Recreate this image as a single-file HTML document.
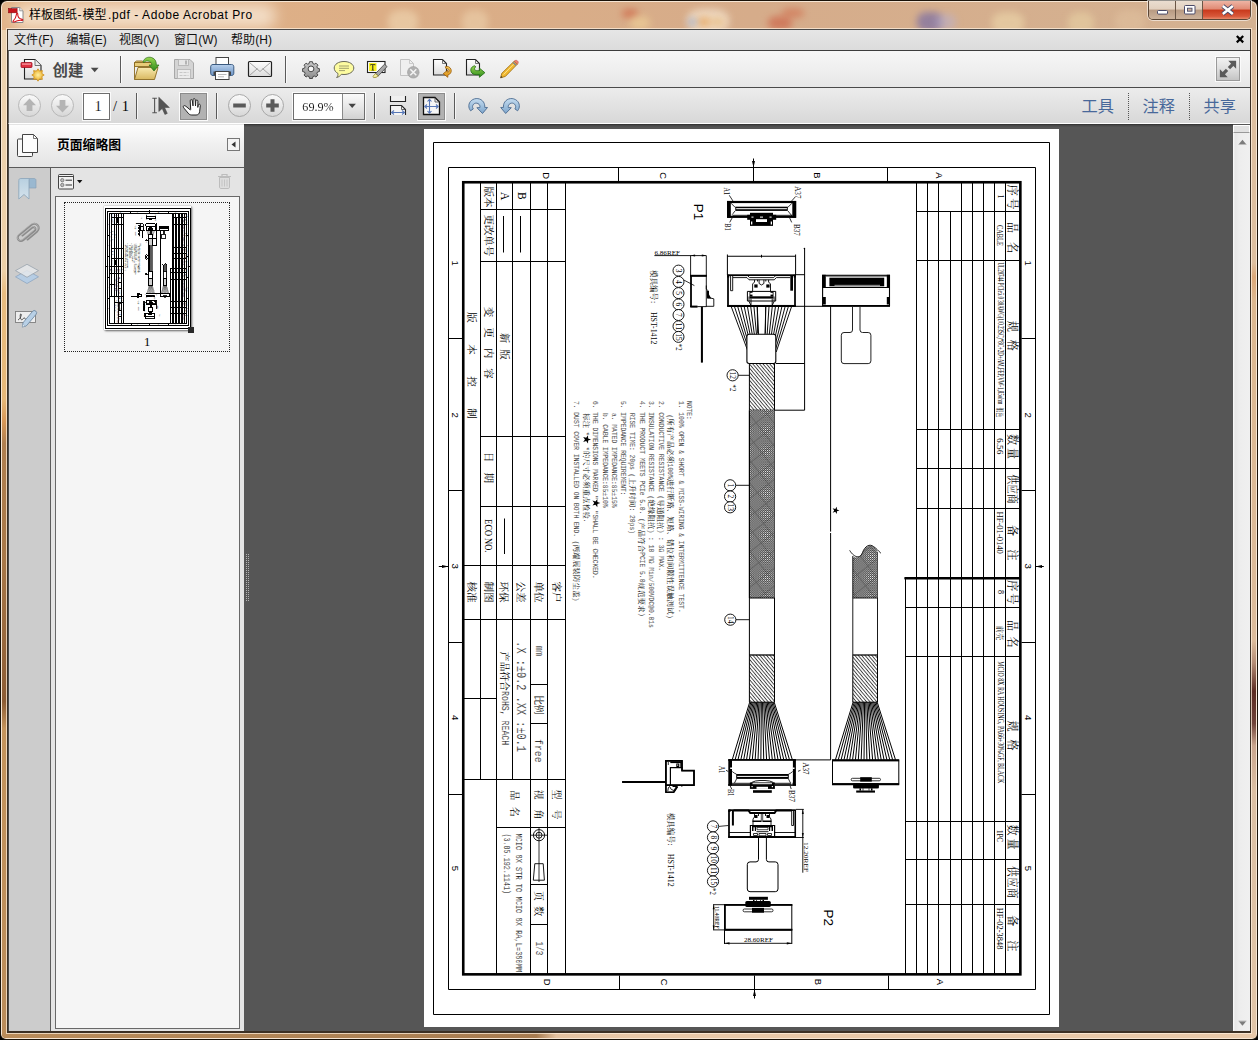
<!DOCTYPE html>
<html><head><meta charset="utf-8"><title>样板图纸-模型.pdf - Adobe Acrobat Pro</title>
<style>
*{box-sizing:border-box}
html,body{margin:0;padding:0}
body{width:1258px;height:1040px;overflow:hidden;position:relative;background:#000;font-family:"Liberation Sans",sans-serif;font-size:12px;color:#000}
.abs{position:absolute}
#frame{left:0;top:0;width:1258px;height:1040px;border-radius:7px 7px 6px 6px;background:#1a1208;overflow:hidden}
#glass{left:1px;top:1px;width:1256px;height:1038px;border-radius:6px 6px 5px 5px;background:#f6e6d4;overflow:hidden}
#tan{left:1px;top:1px;width:1254px;height:1036px;border-radius:5px 5px 4px 4px;overflow:hidden;
 background:linear-gradient(90deg,#e2b48a 0%,#dcae86 30%,#d6ac8a 60%,#d4b292 100%)}
#tanL{left:0;top:28px;width:5px;height:1008px;background:linear-gradient(180deg,#ecd2b0 0.0%,#ecd0a8 23.9%,#e8bc80 26.1%,#e6b878 36.6%,#d89858 38.8%,#b08050 41.0%,#a87848 52.7%,#8c5c34 66.6%,#c4945c 69.3%,#ba8c5a 100.0%)}
#tanR{left:1249px;top:28px;width:5px;height:1008px;background:linear-gradient(180deg,#dec0a0 0.0%,#dec0a0 23.1%,#dca878 24.5%,#dcb890 26.9%,#dcbc9c 60.6%,#b48c74 62.8%,#5c2c22 65.6%,#70443a 68.8%,#caa68e 71.0%,#dcc0a4 75.5%,#e2c6a8 100.0%)}
#tanB{left:0;top:1031px;width:1254px;height:5px;background:linear-gradient(90deg,#ba8c5a 0%,#ae8254 30%,#a87c50 42.6%,#e4c2a0 44.2%,#e8c8a8 50%,#e8c8a8 100%)}
.blob{position:absolute;border-radius:40%;filter:blur(3.5px)}
#client{left:7px;top:29px;width:1244px;height:1004px;background:#3c3024;box-shadow:0 0 0 1px rgba(255,240,222,.72)}
#cl2{left:8px;top:29px;width:1242px;height:1002px;background:#565656;overflow:hidden}
#title{left:29px;top:7px;height:16px;line-height:16px;font-size:12px;white-space:nowrap;color:#000}
#menubar{left:0;top:0;width:1242px;height:21px;border-top:1px solid #4a4a4a;background:linear-gradient(180deg,#e6e6e6,#dcdcdc)}
.mi{position:absolute;top:3px;height:15px;line-height:15px;font-size:12px;white-space:nowrap;color:#111}
#tb1{left:0;top:21px;width:1242px;height:37px;border-top:1px solid #3c3c3c;border-left:1px solid #666;background:linear-gradient(180deg,#f6f6f6 0%,#efefef 50%,#e6e6e6 100%)}
#tb2{left:0;top:58px;width:1242px;height:37px;border-top:1px solid #4a4a4a;border-left:1px solid #666;border-bottom:1px solid #fff;background:linear-gradient(180deg,#ececec 0%,#e2e2e2 50%,#d8d8d8 100%)}
.sep{position:absolute;width:1px;background:#5a5a5a}
.sep:after{content:"";position:absolute;left:1px;top:0;width:1px;height:100%;background:rgba(255,255,255,.7)}
.dsep{position:absolute;width:0;border-left:1px dotted #555;top:5px;height:27px}
.box{position:absolute;background:#fff;border:1px solid #6e6e6e;box-shadow:0 0 0 1px rgba(255,255,255,.8)}
.selbtn{position:absolute;background:#b2b2b2;border:1px solid #8c8c8c;box-shadow:0 0 0 1px rgba(255,255,255,.85)}
.serif{font-family:"Liberation Serif",serif}
#doc{left:236px;top:95px;width:989px;height:908px;background:#565656}
#docshadow{left:0;top:95px;width:1225px;height:3px;background:linear-gradient(180deg,#2e2e2e,#484848 50%,#545454)}
#page{left:416px;top:100px;width:635px;height:898px;background:#fff}
#vs{left:1225px;top:96px;width:17px;height:907px;background:linear-gradient(90deg,#fdfdfd 0,#e6e6e6 2px,#ededed 6px,#f0f0f0 100%)}
#nav{left:0;top:95px;width:236px;height:908px;background:#e4e4e4}
#navl{left:0;top:0;width:1px;height:908px;background:#4c4c4c}
#navhead{left:1px;top:1px;width:235px;height:43px;background:linear-gradient(180deg,#fdfdfd 0%,#f0f0f0 45%,#e4e4e4 100%);border-bottom:1px solid #5a5a5a}
#strip{left:1px;top:44px;width:42px;height:863px;background:#cccccc;border-right:1px solid #5c5c5c}
#thumbs{left:47px;top:72px;width:185px;height:833px;background:#f5f5f5;border:1px solid #686868}
#navr{left:235px;top:1px;width:1px;height:906px;background:#c8c8c8}
svg{position:absolute;overflow:visible}
#dwg .n{vector-effect:non-scaling-stroke}
.cj{font-family:"Liberation Sans","Noto Sans CJK SC",sans-serif}
.cjb{font-family:"Liberation Sans","Noto Sans CJK SC",sans-serif;font-weight:bold}
.cs{font-family:"Liberation Serif","Noto Serif CJK SC",serif}
</style></head><body>
<div id="frame" class="abs"><div id="glass" class="abs"><div id="tan" class="abs">
<div class="blob" style="left:386px;top:8px;width:30px;height:24px;background:#f2dcb8;opacity:0.55"></div>
<div class="blob" style="left:460px;top:8px;width:26px;height:24px;background:#f0d8b4;opacity:0.5"></div>
<div class="blob" style="left:620px;top:7px;width:16px;height:9px;background:#cc5a3c;opacity:0.6"></div>
<div class="blob" style="left:628px;top:14px;width:20px;height:14px;background:#f0d49a;opacity:0.6"></div>
<div class="blob" style="left:685px;top:7px;width:42px;height:24px;background:#f6e8d4;opacity:0.7"></div>
<div class="blob" style="left:695px;top:15px;width:14px;height:10px;background:#eaa050;opacity:0.6"></div>
<div class="blob" style="left:686px;top:16px;width:9px;height:8px;background:#7a9ad0;opacity:0.5"></div>
<div class="blob" style="left:710px;top:16px;width:12px;height:8px;background:#e8b060;opacity:0.5"></div>
<div class="blob" style="left:766px;top:14px;width:24px;height:14px;background:#cc5a40;opacity:0.6"></div>
<div class="blob" style="left:780px;top:6px;width:22px;height:10px;background:#d06848;opacity:0.55"></div>
<div class="blob" style="left:915px;top:10px;width:26px;height:20px;background:#6a62a8;opacity:0.6"></div>
<div class="blob" style="left:934px;top:12px;width:20px;height:16px;background:#b8b0d0;opacity:0.5"></div>
<div class="blob" style="left:990px;top:10px;width:32px;height:22px;background:#f0dcae;opacity:0.55"></div>
<div class="blob" style="left:1066px;top:10px;width:26px;height:22px;background:#ecd8a8;opacity:0.5"></div>
<div class="blob" style="left:1113px;top:8px;width:30px;height:22px;background:#e8cca8;opacity:0.35"></div>
<div class="abs" style="left:12px;top:2px;width:262px;height:24px;border-radius:12px;background:rgba(255,248,236,.62);filter:blur(7px)"></div>
<div id="tanL" class="abs"></div><div id="tanR" class="abs"></div><div id="tanB" class="abs"></div>
</div></div></div>
<div class="abs" style="left:1148px;top:1px;width:103px;height:19px;border:1px solid #5a4636;border-top:none;border-radius:0 0 5px 5px;overflow:hidden;box-shadow:0 0 0 1px rgba(255,255,255,.55)">
<div class="abs" style="left:0;top:0;width:27px;height:18px;background:linear-gradient(180deg,#eaddd0 0%,#e2d0bf 45%,#b89a82 50%,#cdb39c 100%);border-right:1px solid #6a5646"></div>
<div class="abs" style="left:27px;top:0;width:27px;height:18px;background:linear-gradient(180deg,#eaddd0 0%,#e2d0bf 45%,#b89a82 50%,#cdb39c 100%);border-right:1px solid #6a5646"></div>
<div class="abs" style="left:54px;top:0;width:48px;height:18px;background:linear-gradient(180deg,#eeb4a4 0%,#e08a74 45%,#c8391c 50%,#d8583a 85%,#e88a6a 100%)"></div>
<svg width="103" height="20" style="left:-1px;top:-1px">
<rect x="9.5" y="10.5" width="10" height="3.6" rx="1" fill="#fff" stroke="#4a4a68" stroke-width="1"/>
<rect x="36.5" y="5.5" width="10.5" height="8.5" rx="1" fill="#fff" stroke="#4a4a68" stroke-width="1"/>
<rect x="39.5" y="8.2" width="4.5" height="3" fill="#c8b09c" stroke="#4a4a68" stroke-width=".9"/>
<path d="M74.800 6l10 8M84.800 6l-10 8" stroke="#4a4a68" stroke-width="4.200" stroke-linecap="butt"/><path d="M74.800 6l10 8M84.800 6l-10 8" stroke="#fff" stroke-width="2.500"/>
</svg></div>
<svg width="18" height="18" style="left:8px;top:6px" viewBox="0 0 18 18">
<path d="M3.5 1.5h8.2l3.3 3.3v11.7h-11.5z" fill="#fff" stroke="#8a8a8a" stroke-width="1"/>
<path d="M11.7 1.5v3.3h3.3" fill="#e8e8e8" stroke="#8a8a8a" stroke-width=".8"/>
<rect x="0.5" y="2.6" width="8.6" height="4.2" fill="#c8141c" stroke="#8c0a10" stroke-width=".6"/>
<path d="M5.2 14.8c1.6-1.4 3-4.4 3.3-6.6.2-1.2 1.4-1.1 1.3.2-.2 2.3 1.6 4.4 4.3 4.9 1 .2.9 1.2-.2 1.1-2.7-.3-5.4.3-7.6 1.5-1 .5-1.8-.4-1.1-1.100z" fill="none" stroke="#d2141c" stroke-width="1.1"/>
</svg>
<svg width="1258" height="30" style="left:0;top:0">
<text class="cj" x="29" y="19.3" font-size="12" fill="#000">样板图纸</text>
<text class="cj" x="82.5" y="19.3" font-size="12" fill="#000">模型</text>
</svg>
<div id="title" class="abs"><span style="position:absolute;left:48.5px">-</span><span style="position:absolute;left:79px;letter-spacing:.58px" id="ttxt">.pdf - Adobe Acrobat Pro</span></div>
<div id="client" class="abs"></div><div id="cl2" class="abs">
<div id="menubar" class="abs">
<svg width="300" height="20" style="left:-8px;top:-1px">
<text class="cj" x="14" y="14.6" font-size="12" fill="#111">文件</text>
<text class="cj" x="66.5" y="14.6" font-size="12" fill="#111">编辑</text>
<text class="cj" x="119" y="14.6" font-size="12" fill="#111">视图</text>
<text class="cj" x="174" y="14.6" font-size="12" fill="#111">窗口</text>
<text class="cj" x="231" y="14.6" font-size="12" fill="#111">帮助</text>
</svg>
<span class="mi" style="left:30.3px">(F)</span>
<span class="mi" style="left:82.8px">(E)</span>
<span class="mi" style="left:135.3px">(V)</span>
<span class="mi" style="left:190.3px">(W)</span>
<span class="mi" style="left:247.3px">(H)</span>
<svg width="12" height="12" style="left:1226px;top:3px" viewBox="0 0 12 12"><path d="M2.800 3L9.200 9.400M9.200 3L2.800 9.400" stroke="#000" stroke-width="2.200"/></svg>
</div>
<div id="tb1" class="abs">
<svg width="1242" height="37" style="left:-9px;top:-51px" viewBox="0 0 1242 37">

<defs>
<linearGradient id="gp" x1="0" y1="0" x2="0" y2="1"><stop offset="0" stop-color="#fff"/><stop offset="1" stop-color="#dcdcdc"/></linearGradient>
<linearGradient id="gfold" x1="0" y1="0" x2="0" y2="1"><stop offset="0" stop-color="#f8eab0"/><stop offset="1" stop-color="#d8b860"/></linearGradient>
<linearGradient id="ggrn" x1="0" y1="0" x2="0" y2="1"><stop offset="0" stop-color="#9ad850"/><stop offset="1" stop-color="#2c8a1c"/></linearGradient>
<linearGradient id="gblu" x1="0" y1="0" x2="0" y2="1"><stop offset="0" stop-color="#b8d0ec"/><stop offset="1" stop-color="#6c94c6"/></linearGradient>
<linearGradient id="gor" x1="0" y1="0" x2="0" y2="1"><stop offset="0" stop-color="#f8d060"/><stop offset="1" stop-color="#d88a10"/></linearGradient>
<linearGradient id="ggear" x1="0" y1="0" x2="0" y2="1"><stop offset="0" stop-color="#cacaca"/><stop offset="1" stop-color="#8c8c8c"/></linearGradient>
<radialGradient id="gstar"><stop offset="0" stop-color="#fff0a0"/><stop offset="1" stop-color="#e8a820"/></radialGradient>
</defs>
<!-- create -->
<path d="M24.500 59.500h10.500l6 6v13.500h-16.500z" fill="url(#gp)" stroke="#222" stroke-width="1.1"/>
<path d="M35 59.500v6h6" fill="#eee" stroke="#555" stroke-width=".8"/>
<rect x="21" y="62.500" width="11" height="5" rx=".8" fill="#e03040" stroke="#a01020" stroke-width=".8"/>
<rect x="22" y="63.300" width="9" height="1.600" fill="#f08890"/>
<path d="M38 68.800l1.600 2.300 2.800-.5-.5 2.800 2.300 1.600-2.300 1.600.5 2.800-2.800-.5-1.600 2.300-1.600-2.300-2.800.5.500-2.800-2.300-1.600 2.300-1.600-.5-2.800 2.800.5z" fill="url(#gstar)" stroke="#c88a18" stroke-width=".7"/>
<path d="M90.800 67.800h7.800l-3.900 4.400z" fill="#4a4a4a"/>
<!-- open folder -->
<path d="M134.500 62.500l2-1.500h6l1.500 1.500h9.500v4h-19z" fill="#e8cc78" stroke="#8a6a20" stroke-width=".9"/>
<path d="M134.500 79.500v-17h19v4" fill="none" stroke="#8a6a20" stroke-width=".9"/>
<path d="M134.500 79.500l3.500-12h20l-3.500 12z" fill="url(#gfold)" stroke="#8a6a20" stroke-width=".9"/>
<path d="M143 62c1-4 5-5.500 8.500-4.500 3.500 1 5 4 4.800 7.500h2.700l-5 6-5-6h2.800c0-2-1.500-3.800-3.800-4-1.800-.2-3.500.5-4.200 1.800z" fill="url(#ggrn)" stroke="#2a6a18" stroke-width=".7"/>
<!-- save (disabled) -->
<path d="M174.500 59.500h15.500l3.500 3.500v15.500h-19z" fill="#d4d4d4" stroke="#a8a8a8" stroke-width="1"/>
<rect x="178.500" y="59.500" width="10" height="6" fill="#e6e6e6" stroke="#b0b0b0" stroke-width=".8"/>
<rect x="185" y="60.500" width="2" height="4" fill="#b4b4b4"/>
<rect x="177.500" y="69.500" width="13" height="9" fill="#ececec" stroke="#b4b4b4" stroke-width=".8"/>
<path d="M179.500 72.500h9M179.500 75.500h9" stroke="#c8c8c8" stroke-width="1" stroke-dasharray="3 1"/>
<!-- printer -->
<rect x="216" y="57.500" width="12.500" height="9" fill="#fff" stroke="#444" stroke-width="1"/>
<path d="M213 64.500h18.500c1.600 0 2.300 1 2.300 2.300v6.500c0 1.300-.8 2.200-2.300 2.200h-18.500c-1.500 0-2.300-.9-2.300-2.200v-6.500c0-1.300.7-2.300 2.300-2.300z" fill="url(#gblu)" stroke="#3a5a80" stroke-width="1"/>
<path d="M213.500 71.500h17.500v3.500h-17.500z" fill="#444"/>
<rect x="215.500" y="71.500" width="13.500" height="8" fill="#fff" stroke="#444" stroke-width="1"/>
<path d="M218 74.500h8.500M218 76.800h6" stroke="#aaa" stroke-width=".8"/>
<!-- mail -->
<rect x="248.500" y="61.500" width="23" height="15" rx="1" fill="url(#gp)" stroke="#222" stroke-width="1.200"/>
<path d="M249.500 62.500l10.500 9 10.500-9M249.500 75.500l8-7M270.500 75.500l-8-7" fill="none" stroke="#9a9a9a" stroke-width=".9"/>
<!-- gear -->
<g transform="translate(311 68.900) scale(.8)"><g fill="url(#ggear)" stroke="#3a3a3a" stroke-width="1.100">
<path d="M-1.800-9h3.600l.6 2.400 1.700.7 2.100-1.300 2.500 2.500-1.300 2.100.7 1.700 2.400.6v3.600l-2.400.6-.7 1.700 1.300 2.100-2.500 2.500-2.100-1.300-1.700.7-.6 2.400h-3.600l-.6-2.400-1.700-.7-2.100 1.300-2.500-2.500 1.300-2.100-.7-1.700-2.400-.6v-3.600l2.400-.6.7-1.700-1.300-2.100 2.500-2.500 2.100 1.300 1.700-.7z"/></g>
<circle r="3.600" fill="#f6f6f6" stroke="#333" stroke-width="1.100"/></g>
<!-- comment -->
<path d="M344 61.500c5.500 0 9.800 2.800 9.800 6.500s-4.300 6.500-9.800 6.500c-.9 0-1.800-.1-2.600-.2-1 1.500-2.800 2.800-4.800 3.200 1-1 1.500-2.500 1.400-4-2.300-1.200-3.800-3.200-3.800-5.500 0-3.700 4.300-6.500 9.800-6.500z" fill="#fdfca0" stroke="#6a6a5a" stroke-width="1"/>
<path d="M339 66h10M339 68.300h10M339 70.600h6" stroke="#8a8a60" stroke-width=".8"/>
<!-- highlight text -->
<rect x="367.500" y="61.500" width="17.500" height="11" fill="#fff" stroke="#222" stroke-width="1.100"/>
<rect x="369" y="63" width="7.500" height="8" fill="#f8f020"/>
<path d="M370.300 64.300h5v1.300h-.5l-.3-.6h-1.200v4.800l.8.200v.5h-2.600v-.5l.8-.2v-4.800h-1.200l-.3.600h-.5z" fill="#222"/>
<path d="M384.500 64.200l2.600 2.400-8.800 9.300-2.800-2.300z" fill="#a8a8a8" stroke="#444" stroke-width=".8"/>
<path d="M375.500 73.600l2.800 2.300-2.300 1.500-2.400.2c-.8-.4-.6-1.400 0-2z" fill="#f6f0a0" stroke="#8a7a20" stroke-width=".7"/>
<!-- pdf delete (disabled) -->
<path d="M400.500 59.500h9l4 4v12h-13z" fill="#efefef" stroke="#c2c2c2" stroke-width="1"/>
<path d="M409.500 59.500v4h4" fill="none" stroke="#c2c2c2" stroke-width=".8"/>
<circle cx="413.300" cy="72.300" r="5.800" fill="#b0b0b0" stroke="#9a9a9a" stroke-width=".6"/>
<path d="M410.300 69.300l6 6M416.300 69.300l-6 6" stroke="#f4f4f4" stroke-width="1.500"/>
<!-- pdf + orange arrow -->
<path d="M433.500 59.500h9l4 4v11.500h-13z" fill="url(#gp)" stroke="#222" stroke-width="1.100"/>
<path d="M442.500 59.500v4h4" fill="none" stroke="#555" stroke-width=".8"/>
<path d="M445.200 66.800c2.500-1 5 .200 5.800 2.500.9 2.600-.6 5-3.200 5.800v2.200l-4.600-3.600 4.600-3.600v2.200c1-.4 1.500-1.300 1.200-2.300-.4-1.100-1.500-1.500-2.700-1.100z" fill="url(#gor)" stroke="#9a5a08" stroke-width=".8"/>
<!-- pdf + green arrow -->
<path d="M466.500 59.500h9l4 4v11.500h-13z" fill="url(#gp)" stroke="#222" stroke-width="1.100"/>
<path d="M475.500 59.500v4h4" fill="none" stroke="#555" stroke-width=".8"/>
<path d="M474.800 65.800c-3 .5-4.600 3-3.800 5.600.7 2.300 2.800 3.400 5.800 3.300h2.600v2.600l5.500-4.600-5.500-4.600v2.600h-2.200c-1.500 0-2.400-.5-2.600-1.500-.2-1 .2-1.900 1.200-2.300z" fill="url(#ggrn)" stroke="#1e6a12" stroke-width=".8"/>
<!-- pencil -->
<path d="M514.200 61.200l3.200 2.900-12 12.300-4.900 1.500 1.400-4.700z" fill="#f0b830" stroke="#9a6a10" stroke-width=".8"/>
<path d="M513 62.400l3.200 2.900" stroke="#888" stroke-width="1.600"/>
<path d="M514.200 61.200c1-1 2.300-1.200 3.300-.3 1 .9 1 2.200-.1 3.200z" fill="#f08070" stroke="#c05040" stroke-width=".6"/>
<path d="M500.500 77.900l.6-2 1.500 1.400z" fill="#333"/>
<path d="M503.600 74.500l10-10.300" stroke="#fbe08a" stroke-width="1"/>

<text class="cjb" x="52.6" y="75.6" font-size="15.4" fill="#4a4a4a">创建</text>
</svg>
<div class="sep" style="left:111px;top:5px;height:27px"></div><div class="sep" style="left:276px;top:5px;height:27px"></div>
<div class="abs" style="left:1207px;top:6px;width:24px;height:24px;border:1px solid #9a9a9a;background:linear-gradient(180deg,#f2f2f2,#dcdcdc 55%,#c4c4c4);box-shadow:0 0 0 1px rgba(255,255,255,.7)"><svg width="22" height="22" style="left:0;top:0" viewBox="0 0 23 23"><path d="M20 3v8.200l-2.900-2.900-3.400 3.400-2.400-2.400 3.400-3.400-2.900-2.900zM3 20v-8.200l2.900 2.900 3.400-3.400 2.400 2.400-3.400 3.400 2.900 2.900z" fill="#5a5a5a"/></svg></div>
</div>
<div id="tb2" class="abs">
<div class="box" style="left:74px;top:5px;width:27px;height:27px"></div>
<div class="serif abs" style="left:74px;top:5px;width:27px;height:27px;line-height:27px;text-align:center;font-size:14.5px;padding-left:3px;-webkit-text-stroke:.14px #fff">1</div>
<div class="serif abs" style="left:104px;top:5px;height:27px;line-height:27px;font-size:14.5px;white-space:nowrap;word-spacing:1px">/ 1</div>
<div class="sep" style="left:127px;top:5px;height:26px"></div>
<div class="selbtn" style="left:171px;top:5px;width:27px;height:27px"></div>
<div class="sep" style="left:207px;top:5px;height:26px"></div>
<div class="box" style="left:284px;top:5px;width:72px;height:27px"></div>
<div class="abs" style="left:333px;top:6px;width:22px;height:25px;border-left:1px solid #8a8a8a;background:linear-gradient(180deg,#fafafa,#e8e8e8 50%,#d2d2d2)"></div>
<div class="serif abs" style="left:285px;top:5px;width:48px;height:27px;line-height:27px;text-align:center;font-size:13.5px;transform:scaleX(.9);-webkit-text-stroke:.14px #fff">69.9%</div>
<div class="sep" style="left:365px;top:5px;height:26px"></div>
<div class="selbtn" style="left:409px;top:5px;width:27px;height:27px"></div>
<div class="sep" style="left:445px;top:5px;height:26px"></div>
<div class="dsep" style="left:1119px"></div><div class="dsep" style="left:1180px"></div>
<svg width="1242" height="36" style="left:-9px;top:-88px" viewBox="0 0 1242 36">

<defs>
<linearGradient id="gc" x1="0" y1="0" x2="0" y2="1"><stop offset="0" stop-color="#fbfbfb"/><stop offset="1" stop-color="#d6d6d6"/></linearGradient>
<linearGradient id="grot" x1="0" y1="0" x2="0" y2="1"><stop offset="0" stop-color="#c4dcf0"/><stop offset="1" stop-color="#7ea6cc"/></linearGradient>
</defs>
<circle cx="29.500" cy="105.500" r="11" fill="url(#gc)" stroke="#b8b8b8" stroke-width="1"/>
<path d="M29.500 98.500l6.500 6.800h-3.600v5.700h-5.800v-5.700h-3.600z" fill="#b4b4b4"/>
<circle cx="62.500" cy="105.500" r="11" fill="url(#gc)" stroke="#b8b8b8" stroke-width="1"/>
<path d="M62.500 112.500l6.500-6.800h-3.600v-5.700h-5.800v5.700h-3.600z" fill="#b4b4b4"/>
<!-- select tool -->
<path d="M152.300 98.200h4.600M152.300 112.800h4.600M154.600 98.200v14.600" stroke="#555" stroke-width="1.100" fill="none"/>
<path d="M158.800 97.200v14.300l3.400-3 2.700 6 2.400-1.100-2.700-5.900h4.800z" fill="#555" stroke="#444" stroke-width=".5"/>
<!-- hand -->
<path d="M187 107.200c-1.400-1.300-2.600-2-3.400-1.300-.8.700.1 1.900 1 3l3.600 4.300c1 1.200 2 1.800 3.600 1.800h4.300c2 0 3.200-1.200 3.500-3.200l.7-6.300c.2-1.500-1.700-1.800-2-.3l-.5 2.200.1-6.200c0-1.500-2-1.600-2.100-.1l-.3 4.900-.3-6.300c-.1-1.500-2.100-1.500-2.100 0l-.1 6.200-.7-5.300c-.2-1.500-2.200-1.300-2.100.2l.5 8.500c0 .6-.3.800-.7.400z" fill="#fff" stroke="#222" stroke-width="1" stroke-linejoin="round"/>
<!-- zoom out / in -->
<circle cx="239.500" cy="105.500" r="11" fill="url(#gc)" stroke="#a8a8a8" stroke-width="1"/>
<rect x="233.200" y="103.500" width="12.600" height="4" fill="#5a5a5a"/>
<circle cx="272.500" cy="105.500" r="11" fill="url(#gc)" stroke="#a8a8a8" stroke-width="1"/>
<path d="M266.200 103.500h4.300v-4.300h4v4.300h4.300v4h-4.300v4.300h-4v-4.300h-4.300z" fill="#5a5a5a"/>
<path d="M348.500 103.800h7.400l-3.700 4.200z" fill="#444"/>
<!-- fit width -->
<path d="M390.500 96v5.500h15v-5.500" fill="#f0f0f0" stroke="#222" stroke-width="1.100"/>
<path d="M390.500 115v-9.500h11l4 4v5.500" fill="#f4f4f4" stroke="#222" stroke-width="1.100"/>
<path d="M401.500 105.500v4h4" fill="none" stroke="#444" stroke-width=".8"/>
<path d="M391.500 112.500h13M394 110.500l-2.500 2 2.500 2M402 110.500l2.500 2-2.500 2" fill="none" stroke="#5878b8" stroke-width="1.100"/>
<!-- fit page -->
<path d="M423.500 97.500h11.500l4.500 4.500v12.500h-16z" fill="#f6f6f6" stroke="#111" stroke-width="1.300"/>
<path d="M435 97.500v4.500h4.500" fill="none" stroke="#444" stroke-width=".8"/>
<path d="M429.500 99.500v13.500M425 106.500h13M427.500 101.500l2-2.200 2 2.200M427.500 111l2 2.200 2-2.200M427 104.500l-2.200 2 2.200 2M436 104.500l2.200 2-2.200 2" fill="none" stroke="#5878b8" stroke-width="1.100"/>
<!-- rotate cw / ccw -->
<path d="M470.600 110.800c-2.600-3-2.300-7.600.7-10.200 3.800-3.300 9.600-2.500 12.200 1.500 1.100 1.700 1.400 3.500 1.200 5.300l2.800.1-5 6-5.600-5.800 3-.1c.3-1.800-.4-3.200-1.800-4-1.500-.8-3.300-.6-4.500.6-1.300 1.300-1.400 3.300-.3 4.700z" fill="url(#grot)" stroke="#4a6a90" stroke-width=".9" stroke-linejoin="round"/>
<path d="M517.600 110.800c2.600-3 2.300-7.600-.7-10.200-3.800-3.300-9.600-2.500-12.200 1.500-1.100 1.700-1.400 3.500-1.200 5.300l-2.800.1 5 6 5.600-5.800-3-.1c-.3-1.800.4-3.200 1.800-4 1.500-.8 3.300-.6 4.500.6 1.300 1.300 1.400 3.300.3 4.700z" fill="url(#grot)" stroke="#4a6a90" stroke-width=".9" stroke-linejoin="round"/>

<text class="cj" x="1081.5" y="112" font-size="16.2" fill="#48689a">工具</text>
<text class="cj" x="1142.5" y="112" font-size="16.2" fill="#48689a">注释</text>
<text class="cj" x="1203.5" y="112" font-size="16.2" fill="#48689a">共享</text>
</svg>
</div>
<div id="doc" class="abs"></div>
<div class="abs" style="left:238px;top:525px;width:1px;height:47px;background-image:linear-gradient(#b2b2b2 50%,transparent 50%);background-size:1px 2px"></div><div class="abs" style="left:240px;top:525px;width:1px;height:47px;background-image:linear-gradient(#b2b2b2 50%,transparent 50%);background-size:1px 2px"></div>
<div id="page" class="abs"></div>
<svg class="abs" style="left:416px;top:100px" width="635" height="898" viewBox="424 129 635 898">
<defs>
<pattern id="hd" width="2.6" height="2.6" patternUnits="userSpaceOnUse" patternTransform="rotate(50)"><rect width="2.6" height="2.6" fill="#fff"/><path d="M0 .5H2.600" stroke="#000" stroke-width=".7"/></pattern>
<pattern id="hx" width="2.1" height="2.1" patternUnits="userSpaceOnUse"><rect width="2.1" height="2.1" fill="#000"/><path d="M1.050 0.290L1.810 1.050L1.050 1.810L0.290 1.050zM0.000 -0.760L0.760 0.000L0.000 0.760L-0.760 0.000zM2.100 -0.760L2.860 0.000L2.100 0.760L1.340 0.000zM0.000 1.340L0.760 2.100L0.000 2.860L-0.760 2.100zM2.100 1.340L2.860 2.100L2.100 2.860L1.340 2.100z" fill="#fff"/></pattern>
<pattern id="hx2" width="14" height="14" patternUnits="userSpaceOnUse" patternTransform="rotate(52)"><path d="M0 .5H14M.5 0V14" stroke="#000" stroke-width=".8"/></pattern>
<marker id="ar" viewBox="0 0 6 4" refX="6" refY="2" markerWidth="6" markerHeight="4" orient="auto-start-reverse"><path d="M0 .6L6 2L0 3.400z"/></marker>
</defs>
<g id="dwg">
<rect class="n" x="433.5" y="142.5" width="616" height="872" rx="0" stroke="#000" stroke-width="1" fill="none"/>
<rect class="n" x="448.5" y="167.5" width="587" height="822" rx="0" stroke="#000" stroke-width="1" fill="none"/>
<rect x="463.25" y="182.25" width="557.1" height="792.1" rx="0" stroke="#000" stroke-width="2.6" fill="none"/>
<rect class="n" x="463.25" y="182.25" width="557.1" height="792.1" rx="0" stroke="#000" stroke-width="1" fill="none"/>
<path class="n" d="M618.5 167.5L618.5 181" stroke="#000" stroke-width="1" fill="none" />
<path class="n" d="M887.5 167.5L887.5 181" stroke="#000" stroke-width="1" fill="none" />
<path class="n" d="M619.5 975.5L619.5 989.5" stroke="#000" stroke-width="1" fill="none" />
<path class="n" d="M888.5 975.5L888.5 989.5" stroke="#000" stroke-width="1" fill="none" />
<path class="n" d="M753.5 158.5L753.5 181" stroke="#000" stroke-width="1" fill="none" />
<path d="M753.500 167.500l-1.500-6.500h3z"/>
<path class="n" d="M754.5 975.5L754.5 998.5" stroke="#000" stroke-width="1" fill="none" />
<path d="M754.500 989.500l-1.500 6.500h3z"/>
<path class="n" d="M448.5 338.5L462 338.5" stroke="#000" stroke-width="1" fill="none" />
<path class="n" d="M1021.5 338.5L1035.5 338.5" stroke="#000" stroke-width="1" fill="none" />
<path class="n" d="M448.5 490.5L462 490.5" stroke="#000" stroke-width="1" fill="none" />
<path class="n" d="M1021.5 490.5L1035.5 490.5" stroke="#000" stroke-width="1" fill="none" />
<path class="n" d="M448.5 642.5L462 642.5" stroke="#000" stroke-width="1" fill="none" />
<path class="n" d="M1021.5 642.5L1035.5 642.5" stroke="#000" stroke-width="1" fill="none" />
<path class="n" d="M448.5 794.5L462 794.5" stroke="#000" stroke-width="1" fill="none" />
<path class="n" d="M1021.5 794.5L1035.5 794.5" stroke="#000" stroke-width="1" fill="none" />
<path class="n" d="M438.8 566.5L448.5 566.5" stroke="#000" stroke-width="1" fill="none" />
<path d="M448.500 566.500l-6.500-1.500v3z"/>
<path class="n" d="M1035.5 566.5L1043.8 566.5" stroke="#000" stroke-width="1" fill="none" />
<path d="M1035.500 566.500l6.500-1.500v3z"/>
<text transform="translate(542.92 172.2) rotate(90)" font-family="'Liberation Sans',sans-serif" font-size="9.4" font-weight="normal" fill="#000" xml:space="preserve">D</text>
<text transform="translate(543.72 978.7) rotate(90)" font-family="'Liberation Sans',sans-serif" font-size="9.4" font-weight="normal" fill="#000" xml:space="preserve">D</text>
<text transform="translate(660.42 172.2) rotate(90)" font-family="'Liberation Sans',sans-serif" font-size="9.4" font-weight="normal" fill="#000" xml:space="preserve">C</text>
<text transform="translate(661.22 978.7) rotate(90)" font-family="'Liberation Sans',sans-serif" font-size="9.4" font-weight="normal" fill="#000" xml:space="preserve">C</text>
<text transform="translate(813.82 172.2) rotate(90)" font-family="'Liberation Sans',sans-serif" font-size="9.4" font-weight="normal" fill="#000" xml:space="preserve">B</text>
<text transform="translate(814.62 978.7) rotate(90)" font-family="'Liberation Sans',sans-serif" font-size="9.4" font-weight="normal" fill="#000" xml:space="preserve">B</text>
<text transform="translate(935.82 172.2) rotate(90)" font-family="'Liberation Sans',sans-serif" font-size="9.4" font-weight="normal" fill="#000" xml:space="preserve">A</text>
<text transform="translate(936.62 978.7) rotate(90)" font-family="'Liberation Sans',sans-serif" font-size="9.4" font-weight="normal" fill="#000" xml:space="preserve">A</text>
<text transform="translate(452.44 260.4) rotate(90)" font-family="'Liberation Sans',sans-serif" font-size="9.6" font-weight="normal" fill="#000" xml:space="preserve">1</text>
<text transform="translate(1024.74 260.4) rotate(90)" font-family="'Liberation Sans',sans-serif" font-size="9.6" font-weight="normal" fill="#000" xml:space="preserve">1</text>
<text transform="translate(452.44 412.4) rotate(90)" font-family="'Liberation Sans',sans-serif" font-size="9.6" font-weight="normal" fill="#000" xml:space="preserve">2</text>
<text transform="translate(1024.74 412.4) rotate(90)" font-family="'Liberation Sans',sans-serif" font-size="9.6" font-weight="normal" fill="#000" xml:space="preserve">2</text>
<text transform="translate(452.44 563.4) rotate(90)" font-family="'Liberation Sans',sans-serif" font-size="9.6" font-weight="normal" fill="#000" xml:space="preserve">3</text>
<text transform="translate(1024.74 563.4) rotate(90)" font-family="'Liberation Sans',sans-serif" font-size="9.6" font-weight="normal" fill="#000" xml:space="preserve">3</text>
<text transform="translate(452.44 714.9) rotate(90)" font-family="'Liberation Sans',sans-serif" font-size="9.6" font-weight="normal" fill="#000" xml:space="preserve">4</text>
<text transform="translate(1024.74 714.9) rotate(90)" font-family="'Liberation Sans',sans-serif" font-size="9.6" font-weight="normal" fill="#000" xml:space="preserve">4</text>
<text transform="translate(452.44 865.8) rotate(90)" font-family="'Liberation Sans',sans-serif" font-size="9.6" font-weight="normal" fill="#000" xml:space="preserve">5</text>
<text transform="translate(1024.74 865.8) rotate(90)" font-family="'Liberation Sans',sans-serif" font-size="9.6" font-weight="normal" fill="#000" xml:space="preserve">5</text>
<path class="n" d="M480.5 183L480.5 779.5" stroke="#000" stroke-width="1" fill="none" />
<path class="n" d="M496.5 183L496.5 974" stroke="#000" stroke-width="1" fill="none" />
<path class="n" d="M512.5 183L512.5 779.5" stroke="#000" stroke-width="1" fill="none" />
<path class="n" d="M530.5 183L530.5 974" stroke="#000" stroke-width="1" fill="none" />
<path class="n" d="M547.5 183L547.5 974" stroke="#000" stroke-width="1" fill="none" />
<path class="n" d="M565.5 183L565.5 974" stroke="#000" stroke-width="1" fill="none" />
<path class="n" d="M480.5 209.5L565.5 209.5" stroke="#000" stroke-width="1" fill="none" />
<path class="n" d="M480.5 261.5L565.5 261.5" stroke="#000" stroke-width="1" fill="none" />
<path class="n" d="M480.5 436.5L565.5 436.5" stroke="#000" stroke-width="1" fill="none" />
<path class="n" d="M480.5 506.5L565.5 506.5" stroke="#000" stroke-width="1" fill="none" />
<path class="n" d="M464 565.5L565.5 565.5" stroke="#000" stroke-width="1" fill="none" />
<path class="n" d="M464 619.5L565.5 619.5" stroke="#000" stroke-width="1" fill="none" />
<path class="n" d="M464 779.5L565.5 779.5" stroke="#000" stroke-width="1" fill="none" />
<path class="n" d="M464 698.5L496.5 698.5" stroke="#000" stroke-width="1" fill="none" />
<path class="n" d="M530.5 684.5L547.5 684.5" stroke="#000" stroke-width="1" fill="none" />
<path class="n" d="M530.5 723.5L547.5 723.5" stroke="#000" stroke-width="1" fill="none" />
<path class="n" d="M496.5 827.5L565.5 827.5" stroke="#000" stroke-width="1" fill="none" />
<path class="n" d="M530.5 884.5L547.5 884.5" stroke="#000" stroke-width="1" fill="none" />
<path class="n" d="M530.5 924.5L547.5 924.5" stroke="#000" stroke-width="1" fill="none" />
<text class="cs" transform="translate(484.57 186.5) rotate(90)" x="0 10.6" font-size="10.6" fill="#000">版本</text>
<text class="cs" transform="translate(484.61 214.5) rotate(90)" x="0 10.4 20.8 31.2" font-size="10.5" fill="#000">更改单号</text>
<text transform="translate(500.7 192) rotate(90)" font-family="'Liberation Serif',serif" font-size="11.5" font-weight="normal" fill="#000" xml:space="preserve">A</text>
<text transform="translate(517.71 192) rotate(90)" font-family="'Liberation Serif',serif" font-size="11.5" font-weight="normal" fill="#000" xml:space="preserve">B</text>
<path class="n" d="M503.5 216L503.5 252.5" stroke="#000" stroke-width="1" fill="none" />
<path class="n" d="M520.5 216L520.5 252.5" stroke="#000" stroke-width="1" fill="none" />
<path class="n" d="M504.5 518.5L504.5 554" stroke="#000" stroke-width="1" fill="none" />
<text class="cs" transform="translate(484.57 306.7) rotate(90)" x="0 20.5 41 61.5" font-size="10.6" fill="#000">变更内容</text>
<text class="cs" transform="translate(467.97 312.2) rotate(90)" x="0 32 64 96" font-size="10.6" fill="#000">版本控制</text>
<text class="cs" transform="translate(500.62 333) rotate(90)" x="0 16.4" font-size="10.2" fill="#000">新版</text>
<text class="cs" transform="translate(484.57 451.7) rotate(90)" x="0 20.7" font-size="10.6" fill="#000">日期</text>
<text transform="translate(484.54 519.3) rotate(90)" font-family="'Liberation Serif',serif" font-size="10.5" font-weight="normal" fill="#000" textLength="33" lengthAdjust="spacingAndGlyphs" xml:space="preserve">ECO NO.</text>
<text class="cs" transform="translate(467.97 581.4) rotate(90)" x="0 10.5" font-size="10.6" fill="#000">核准</text>
<text class="cs" transform="translate(484.57 581.4) rotate(90)" x="0 10.5" font-size="10.6" fill="#000">制图</text>
<text class="cs" transform="translate(500.47 581.4) rotate(90)" x="0 10.5" font-size="10.6" fill="#000">环保</text>
<text class="cs" transform="translate(517.47 581.4) rotate(90)" x="0 10.5" font-size="10.6" fill="#000">公差</text>
<text class="cs" transform="translate(534.97 581.4) rotate(90)" x="0 10.5" font-size="10.6" fill="#000">单位</text>
<text class="cs" transform="translate(552.57 581.4) rotate(90)" x="0 10.5" font-size="10.6" fill="#000">客户</text>
<text transform="translate(535.7 645.6) rotate(90)" font-family="'Liberation Mono',monospace" font-size="10" font-weight="normal" fill="#000" textLength="10.4" lengthAdjust="spacingAndGlyphs" stroke="#fff" stroke-width="0.2" paint-order="fill stroke" xml:space="preserve">mm</text>
<text transform="translate(517.4 641.3) rotate(90)" font-family="'Liberation Mono',monospace" font-size="12" font-weight="normal" fill="#000" textLength="110.7" lengthAdjust="spacingAndGlyphs" stroke="#fff" stroke-width="0.24" paint-order="fill stroke" xml:space="preserve">.X :±0.2 .XX :±0.1</text>
<text class="cs" transform="translate(501.28 651.82) rotate(90) scale(0.98 1)" x="0 10.04 20.08 30.12" font-size="9.8" fill="#000">产品符合</text>
<text transform="translate(501.7 691.06) rotate(90)" font-family="'Liberation Mono',monospace" font-size="10" font-weight="normal" fill="#000" textLength="54.12" lengthAdjust="spacingAndGlyphs" stroke="#fff" stroke-width="0.2" paint-order="fill stroke" xml:space="preserve">RoHS, REACH</text>
<text class="cs" transform="translate(535.2 695) rotate(90)" x="0 9.6" font-size="10" fill="#000">比例</text>
<text transform="translate(535.12 739.1) rotate(90)" font-family="'Liberation Mono',monospace" font-size="11.7" font-weight="normal" fill="#000" textLength="23.4" lengthAdjust="spacingAndGlyphs" stroke="#fff" stroke-width="0.23" paint-order="fill stroke" xml:space="preserve">free</text>
<text class="cs" transform="translate(552.8 789.5) rotate(90)" x="0 19.9" font-size="10" fill="#000">型号</text>
<text class="cs" transform="translate(535.2 789.5) rotate(90)" x="0 19.9" font-size="10" fill="#000">视角</text>
<text class="cs" transform="translate(511.1 790.3) rotate(90)" x="0 16.5" font-size="10" fill="#000">品名</text>
<text class="cs" transform="translate(535.2 891) rotate(90)" x="0 15.3" font-size="10" fill="#000">页数</text>
<text transform="translate(535.85 941.6) rotate(90)" font-family="'Liberation Mono',monospace" font-size="10.5" font-weight="normal" fill="#000" textLength="13.8" lengthAdjust="spacingAndGlyphs" stroke="#fff" stroke-width="0.21" paint-order="fill stroke" xml:space="preserve">1/3</text>
<text transform="translate(516.43 833.4) rotate(90)" font-family="'Liberation Mono',monospace" font-size="8.4" font-weight="normal" fill="#000" textLength="138.8" lengthAdjust="spacingAndGlyphs" stroke="#fff" stroke-width="0.17" paint-order="fill stroke" xml:space="preserve">MCIO 8X STR TO MCIO 8X RA,L=380MM</text>
<text transform="translate(504.29 833.4) rotate(90)" font-family="'Liberation Mono',monospace" font-size="8.2" font-weight="normal" fill="#000" textLength="60.6" lengthAdjust="spacingAndGlyphs" stroke="#fff" stroke-width="0.16" paint-order="fill stroke" xml:space="preserve">(3.05.192.1141)</text>
<circle cx="539" cy="835.200" r="5.600" fill="none" stroke="#000" stroke-width=".9"/><circle cx="539" cy="835.200" r="3" fill="none" stroke="#000" stroke-width=".9"/>
<path class="n" d="M531 835.2L547.5 835.2" stroke="#000" stroke-width="0.8" fill="none" />
<path class="n" d="M539 828L539 882" stroke="#000" stroke-width="0.8" fill="none" />
<path d="M533.300 880.200L534.800 863.700H543.200L544.400 880.200z" fill="none" stroke="#000" stroke-width=".9"/>
<path class="n" d="M916.5 183L916.5 974" stroke="#000" stroke-width="1" fill="none" />
<path class="n" d="M927.5 183L927.5 974" stroke="#000" stroke-width="1" fill="none" />
<path class="n" d="M938.5 183L938.5 974" stroke="#000" stroke-width="1" fill="none" />
<path class="n" d="M961.5 183L961.5 974" stroke="#000" stroke-width="1" fill="none" />
<path class="n" d="M972.5 183L972.5 974" stroke="#000" stroke-width="1" fill="none" />
<path class="n" d="M983.5 183L983.5 974" stroke="#000" stroke-width="1" fill="none" />
<path class="n" d="M994.5 183L994.5 974" stroke="#000" stroke-width="1" fill="none" />
<path class="n" d="M1005.5 183L1005.5 974" stroke="#000" stroke-width="1" fill="none" />
<path class="n" d="M950.5 211.5L950.5 974" stroke="#000" stroke-width="1" fill="none" />
<path class="n" d="M905.5 578L905.5 974" stroke="#000" stroke-width="1" fill="none" />
<path class="n" d="M916.5 211.5L1019.5 211.5" stroke="#000" stroke-width="1" fill="none" />
<path class="n" d="M916.5 260.5L1019.5 260.5" stroke="#000" stroke-width="1" fill="none" />
<path class="n" d="M916.5 429.5L1019.5 429.5" stroke="#000" stroke-width="1" fill="none" />
<path class="n" d="M916.5 468.5L1019.5 468.5" stroke="#000" stroke-width="1" fill="none" />
<path class="n" d="M916.5 508.5L1019.5 508.5" stroke="#000" stroke-width="1" fill="none" />
<path d="M904.5 578.2L1019.5 578.2" stroke="#000" stroke-width="2.6" fill="none" />
<path class="n" d="M904.5 578.2L1019.5 578.2" stroke="#000" stroke-width="1" fill="none"/>
<path class="n" d="M905.5 607.5L1019.5 607.5" stroke="#000" stroke-width="1" fill="none" />
<path class="n" d="M905.5 656.5L1019.5 656.5" stroke="#000" stroke-width="1" fill="none" />
<path class="n" d="M905.5 821.5L1019.5 821.5" stroke="#000" stroke-width="1" fill="none" />
<path class="n" d="M905.5 859.5L1019.5 859.5" stroke="#000" stroke-width="1" fill="none" />
<path class="n" d="M905.5 904.5L1019.5 904.5" stroke="#000" stroke-width="1" fill="none" />
<text class="cs" transform="translate(1008.29 184.82) rotate(90) scale(0.9 1)" x="0 15" font-size="12.4" fill="#000">序号</text>
<text class="cs" transform="translate(1008.29 222.12) rotate(90) scale(0.9 1)" x="0 22.11" font-size="12.4" fill="#000">品名</text>
<text class="cs" transform="translate(1008.29 320.72) rotate(90) scale(0.9 1)" x="0 21.11" font-size="12.4" fill="#000">规格</text>
<text class="cs" transform="translate(1008.29 434.12) rotate(90) scale(0.9 1)" x="0 15.33" font-size="12.4" fill="#000">数量</text>
<text class="cs" transform="translate(1008.29 474.46) rotate(90) scale(0.78 1)" x="0 12.56 25.13" font-size="12.4" fill="#000">供应商</text>
<text class="cs" transform="translate(1008.29 524.92) rotate(90) scale(0.9 1)" x="0 27" font-size="12.4" fill="#000">备注</text>
<text class="cs" transform="translate(1008.29 580.32) rotate(90) scale(0.9 1)" x="0 14.44" font-size="12.4" fill="#000">序号</text>
<text class="cs" transform="translate(1008.29 620.12) rotate(90) scale(0.9 1)" x="0 18.33" font-size="12.4" fill="#000">品名</text>
<text class="cs" transform="translate(1008.29 720.52) rotate(90) scale(0.9 1)" x="0 21.22" font-size="12.4" fill="#000">规格</text>
<text class="cs" transform="translate(1008.29 824.62) rotate(90) scale(0.9 1)" x="0 15.33" font-size="12.4" fill="#000">数量</text>
<text class="cs" transform="translate(1008.29 866.23) rotate(90) scale(0.85 1)" x="0 12.82 25.41" font-size="12.4" fill="#000">供应商</text>
<text class="cs" transform="translate(1008.29 915.22) rotate(90) scale(0.9 1)" x="0 27.89" font-size="12.4" fill="#000">备注</text>
<text transform="translate(997.56 194.5) rotate(90)" font-family="'Liberation Serif',serif" font-size="8" font-weight="normal" fill="#000" xml:space="preserve">1</text>
<text transform="translate(997.49 225) rotate(90)" font-family="'Liberation Serif',serif" font-size="8.2" font-weight="normal" fill="#000" textLength="20.8" lengthAdjust="spacingAndGlyphs" xml:space="preserve">CABLE</text>
<text transform="translate(997.56 262.5) rotate(90)" font-family="'Liberation Serif',serif" font-size="8" font-weight="normal" fill="#000" textLength="142" lengthAdjust="spacingAndGlyphs" xml:space="preserve">UL20744 PCIe5.0 30AWG(1/0.23SC)*8C+2D+AM,FEP,VW-1,85ohm</text>
<text class="cs" transform="translate(997.31 407.5) rotate(90) scale(0.62 1)" x="0 7.74" font-size="7.6" fill="#000">银色</text>
<text transform="translate(997.49 438) rotate(90)" font-family="'Liberation Serif',serif" font-size="8.2" font-weight="normal" fill="#000" textLength="16.4" lengthAdjust="spacingAndGlyphs" xml:space="preserve">6.56</text>
<text transform="translate(997.36 511.5) rotate(90)" font-family="'Liberation Serif',serif" font-size="8.6" font-weight="normal" fill="#000" textLength="42.4" lengthAdjust="spacingAndGlyphs" xml:space="preserve">HF-01-0140</text>
<text transform="translate(997.56 590) rotate(90)" font-family="'Liberation Serif',serif" font-size="8" font-weight="normal" fill="#000" xml:space="preserve">8</text>
<text class="cs" transform="translate(997.16 625.7) rotate(90) scale(0.92 1)" x="0 8.04" font-size="8" fill="#000">前壳</text>
<text transform="translate(997.56 661.2) rotate(90)" font-family="'Liberation Serif',serif" font-size="8" font-weight="normal" fill="#000" textLength="122" lengthAdjust="spacingAndGlyphs" xml:space="preserve">MCIO 8X RA HOUSING, PA66+30%GF, BLACK</text>
<text transform="translate(997.49 830) rotate(90)" font-family="'Liberation Serif',serif" font-size="8.2" font-weight="normal" fill="#000" textLength="12" lengthAdjust="spacingAndGlyphs" xml:space="preserve">1PC</text>
<text transform="translate(997.36 907.8) rotate(90)" font-family="'Liberation Serif',serif" font-size="8.6" font-weight="normal" fill="#000" textLength="41.6" lengthAdjust="spacingAndGlyphs" xml:space="preserve">HF-02-3848</text>
<text transform="translate(687.29 401) rotate(90)" font-family="'Liberation Mono',monospace" font-size="7.6" font-weight="normal" fill="#000" textLength="18.9" lengthAdjust="spacingAndGlyphs" stroke="#fff" stroke-width="0.15" paint-order="fill stroke" xml:space="preserve">NOTE:</text>
<text transform="translate(679.39 401) rotate(90)" font-family="'Liberation Mono',monospace" font-size="7.6" font-weight="normal" fill="#000" textLength="211.68" lengthAdjust="spacingAndGlyphs" stroke="#fff" stroke-width="0.15" paint-order="fill stroke" xml:space="preserve">1. 100% OPEN &amp; SHORT &amp; MISS-WIRING &amp; INTERMITTENCE TEST.</text>
<text transform="translate(668.29 414.4) rotate(90)" font-family="'Liberation Mono',monospace" font-size="7.6" font-weight="normal" fill="#000" textLength="3.78" lengthAdjust="spacingAndGlyphs" stroke="#fff" stroke-width="0.15" paint-order="fill stroke" xml:space="preserve">(</text>
<text class="cs" transform="translate(667.99 418.33) rotate(90) scale(0.98 1)" x="0 7.71 15.43 23.14 30.86 38.57" font-size="7.4" fill="#000">所有产品必须</text>
<text transform="translate(668.29 463.54) rotate(90)" font-family="'Liberation Mono',monospace" font-size="7.6" font-weight="normal" fill="#000" textLength="15.12" lengthAdjust="spacingAndGlyphs" stroke="#fff" stroke-width="0.15" paint-order="fill stroke" xml:space="preserve">100%</text>
<text class="cs" transform="translate(667.99 478.81) rotate(90) scale(0.98 1)" x="0 7.71 15.43 23.14 30.86 38.57 46.29 54 61.71 69.43 77.14 84.86 92.57 100.29 108 115.71 123.43 131.14" font-size="7.4" fill="#000">进行断路、短路、错位和间隙性误触测试</text>
<text transform="translate(668.29 614.74) rotate(90)" font-family="'Liberation Mono',monospace" font-size="7.6" font-weight="normal" fill="#000" textLength="3.78" lengthAdjust="spacingAndGlyphs" stroke="#fff" stroke-width="0.15" paint-order="fill stroke" xml:space="preserve">)</text>
<text transform="translate(658.79 401) rotate(90)" font-family="'Liberation Mono',monospace" font-size="7.6" font-weight="normal" fill="#000" textLength="98.28" lengthAdjust="spacingAndGlyphs" stroke="#fff" stroke-width="0.15" paint-order="fill stroke" xml:space="preserve">2. CONDUCTIVE RESISTANCE (</text>
<text class="cs" transform="translate(658.49 499.43) rotate(90) scale(0.98 1)" x="0 7.71 15.43 23.14" font-size="7.4" fill="#000">导通阻抗</text>
<text transform="translate(658.79 529.52) rotate(90)" font-family="'Liberation Mono',monospace" font-size="7.6" font-weight="normal" fill="#000" textLength="41.58" lengthAdjust="spacingAndGlyphs" stroke="#fff" stroke-width="0.15" paint-order="fill stroke" xml:space="preserve">) : 3Ω MAX.</text>
<text transform="translate(649.49 401) rotate(90)" font-family="'Liberation Mono',monospace" font-size="7.6" font-weight="normal" fill="#000" textLength="98.28" lengthAdjust="spacingAndGlyphs" stroke="#fff" stroke-width="0.15" paint-order="fill stroke" xml:space="preserve">3. INSULATION RESISTANCE (</text>
<text class="cs" transform="translate(649.19 499.43) rotate(90) scale(0.98 1)" x="0 7.71 15.43 23.14" font-size="7.4" fill="#000">绝缘阻抗</text>
<text transform="translate(649.49 529.52) rotate(90)" font-family="'Liberation Mono',monospace" font-size="7.6" font-weight="normal" fill="#000" textLength="98.28" lengthAdjust="spacingAndGlyphs" stroke="#fff" stroke-width="0.15" paint-order="fill stroke" xml:space="preserve">) : 10 MΩ Min/500VDC@0.01s</text>
<text transform="translate(639.69 401) rotate(90)" font-family="'Liberation Mono',monospace" font-size="7.6" font-weight="normal" fill="#000" textLength="120.96" lengthAdjust="spacingAndGlyphs" stroke="#fff" stroke-width="0.15" paint-order="fill stroke" xml:space="preserve">4. THE PRODUCT MEETS PCIe 5.0. (</text>
<text class="cs" transform="translate(639.39 522.11) rotate(90) scale(0.98 1)" x="0 7.71 15.43 23.14" font-size="7.4" fill="#000">产品符合</text>
<text transform="translate(639.69 552.2) rotate(90)" font-family="'Liberation Mono',monospace" font-size="7.6" font-weight="normal" fill="#000" textLength="30.24" lengthAdjust="spacingAndGlyphs" stroke="#fff" stroke-width="0.15" paint-order="fill stroke" xml:space="preserve">PCIE 5.0</text>
<text class="cs" transform="translate(639.39 582.59) rotate(90) scale(0.98 1)" x="0 7.71 15.43 23.14" font-size="7.4" fill="#000">规范要求</text>
<text transform="translate(639.69 612.68) rotate(90)" font-family="'Liberation Mono',monospace" font-size="7.6" font-weight="normal" fill="#000" textLength="3.78" lengthAdjust="spacingAndGlyphs" stroke="#fff" stroke-width="0.15" paint-order="fill stroke" xml:space="preserve">)</text>
<text transform="translate(629.89 413) rotate(90)" font-family="'Liberation Mono',monospace" font-size="7.6" font-weight="normal" fill="#000" textLength="64.26" lengthAdjust="spacingAndGlyphs" stroke="#fff" stroke-width="0.15" paint-order="fill stroke" xml:space="preserve">RISE TIME: 20ps (</text>
<text class="cs" transform="translate(629.59 477.41) rotate(90) scale(0.98 1)" x="0 7.71 15.43 23.14" font-size="7.4" fill="#000">上升时间</text>
<text transform="translate(629.89 507.5) rotate(90)" font-family="'Liberation Mono',monospace" font-size="7.6" font-weight="normal" fill="#000" textLength="26.46" lengthAdjust="spacingAndGlyphs" stroke="#fff" stroke-width="0.15" paint-order="fill stroke" xml:space="preserve">: 20ps)</text>
<text transform="translate(620.69 401) rotate(90)" font-family="'Liberation Mono',monospace" font-size="7.6" font-weight="normal" fill="#000" textLength="94.5" lengthAdjust="spacingAndGlyphs" stroke="#fff" stroke-width="0.15" paint-order="fill stroke" xml:space="preserve">5. IMPEDANCE REQUIREMENT:</text>
<text transform="translate(611.89 413) rotate(90)" font-family="'Liberation Mono',monospace" font-size="7.6" font-weight="normal" fill="#000" textLength="94.5" lengthAdjust="spacingAndGlyphs" stroke="#fff" stroke-width="0.15" paint-order="fill stroke" xml:space="preserve">a. MATED IMPEDANCE:85±15%</text>
<text transform="translate(602.69 413) rotate(90)" font-family="'Liberation Mono',monospace" font-size="7.6" font-weight="normal" fill="#000" textLength="94.5" lengthAdjust="spacingAndGlyphs" stroke="#fff" stroke-width="0.15" paint-order="fill stroke" xml:space="preserve">b. CABLE IMPEDANCE:85±10%</text>
<text transform="translate(593.49 401) rotate(90)" font-family="'Liberation Mono',monospace" font-size="7.6" font-weight="normal" fill="#000" textLength="98.28" lengthAdjust="spacingAndGlyphs" stroke="#fff" stroke-width="0.15" paint-order="fill stroke" xml:space="preserve">6. THE DIMENSIONS MARKED "</text>
<path d="M596 498.71L597.02 501.65L600.13 501.72L597.65 503.6L598.56 506.58L596 504.8L593.44 506.58L594.35 503.6L591.87 501.72L594.98 501.65z" fill="#000" transform="rotate(90 596 503.06)"/>
<text transform="translate(593.49 510.62) rotate(90)" font-family="'Liberation Mono',monospace" font-size="7.6" font-weight="normal" fill="#000" textLength="68.04" lengthAdjust="spacingAndGlyphs" stroke="#fff" stroke-width="0.15" paint-order="fill stroke" xml:space="preserve">"SHALL BE CHECKED.</text>
<text class="cs" transform="translate(583.89 413.15) rotate(90) scale(0.98 1)" x="0 7.71" font-size="7.4" fill="#000">标注</text>
<text transform="translate(584.19 431.9) rotate(90)" font-family="'Liberation Mono',monospace" font-size="7.6" font-weight="normal" fill="#000" textLength="3.78" lengthAdjust="spacingAndGlyphs" stroke="#fff" stroke-width="0.15" paint-order="fill stroke" xml:space="preserve">"</text>
<path d="M586.7 435.11L587.72 438.05L590.83 438.12L588.35 440L589.26 442.98L586.7 441.2L584.14 442.98L585.05 440L582.57 438.12L585.68 438.05z" fill="#000" transform="rotate(90 586.7 439.46)"/>
<text transform="translate(584.19 447.02) rotate(90)" font-family="'Liberation Mono',monospace" font-size="7.6" font-weight="normal" fill="#000" textLength="3.78" lengthAdjust="spacingAndGlyphs" stroke="#fff" stroke-width="0.15" paint-order="fill stroke" xml:space="preserve">"</text>
<text class="cs" transform="translate(583.89 450.95) rotate(90) scale(0.98 1)" x="0 7.71 15.43 23.14 30.86 38.57 46.29 54 61.71" font-size="7.4" fill="#000">的尺寸必须重点检验</text>
<text transform="translate(584.19 518.84) rotate(90)" font-family="'Liberation Mono',monospace" font-size="7.6" font-weight="normal" fill="#000" textLength="3.78" lengthAdjust="spacingAndGlyphs" stroke="#fff" stroke-width="0.15" paint-order="fill stroke" xml:space="preserve">.</text>
<text transform="translate(574.09 401) rotate(90)" font-family="'Liberation Mono',monospace" font-size="7.6" font-weight="normal" fill="#000" textLength="143.64" lengthAdjust="spacingAndGlyphs" stroke="#fff" stroke-width="0.15" paint-order="fill stroke" xml:space="preserve">7. DUST COVER INSTALLED ON BOTH END. (</text>
<text class="cs" transform="translate(573.79 544.79) rotate(90) scale(0.98 1)" x="0 7.71 15.43 23.14 30.86 38.57 46.29" font-size="7.4" fill="#000">两端展装防尘盖</text>
<text transform="translate(574.09 597.56) rotate(90)" font-family="'Liberation Mono',monospace" font-size="7.6" font-weight="normal" fill="#000" textLength="3.78" lengthAdjust="spacingAndGlyphs" stroke="#fff" stroke-width="0.15" paint-order="fill stroke" xml:space="preserve">)</text>
<path d="M731.2 306.5L748.2 352" stroke="#000" stroke-width="0.95" fill="none" />
<path d="M734.45 306.5L749.61 352" stroke="#000" stroke-width="0.95" fill="none" />
<path d="M737.7 306.5L751.03 352" stroke="#000" stroke-width="0.95" fill="none" />
<path d="M740.95 306.5L752.44 352" stroke="#000" stroke-width="0.95" fill="none" />
<path d="M744.2 306.5L753.85 352" stroke="#000" stroke-width="0.95" fill="none" />
<path d="M747.45 306.5L755.26 352" stroke="#000" stroke-width="0.95" fill="none" />
<path d="M750.7 306.5L756.67 352" stroke="#000" stroke-width="0.95" fill="none" />
<path d="M753.95 306.5L758.09 352" stroke="#000" stroke-width="0.95" fill="none" />
<path d="M757.2 306.5L759.5 352" stroke="#000" stroke-width="0.95" fill="none" />
<path d="M765.8 306.5L764.5 352" stroke="#000" stroke-width="0.95" fill="none" />
<path d="M769.02 306.5L765.96 352" stroke="#000" stroke-width="0.95" fill="none" />
<path d="M772.25 306.5L767.42 352" stroke="#000" stroke-width="0.95" fill="none" />
<path d="M775.48 306.5L768.89 352" stroke="#000" stroke-width="0.95" fill="none" />
<path d="M778.7 306.5L770.35 352" stroke="#000" stroke-width="0.95" fill="none" />
<path d="M781.92 306.5L771.81 352" stroke="#000" stroke-width="0.95" fill="none" />
<path d="M785.15 306.5L773.28 352" stroke="#000" stroke-width="0.95" fill="none" />
<path d="M788.38 306.5L774.74 352" stroke="#000" stroke-width="0.95" fill="none" />
<path d="M791.6 306.5L776.2 352" stroke="#000" stroke-width="0.95" fill="none" />
<path class="n" d="M757.3 306.5L757.6 333.5" stroke="#000" stroke-width="0.9" fill="none" />
<path class="n" d="M765.7 306.5L765.4 333.5" stroke="#000" stroke-width="0.9" fill="none" />
<rect class="n" x="746.9" y="334.3" width="28.9" height="29.2" rx="2.2" stroke="#000" stroke-width="1.1" fill="#fff"/>
<rect x="749.4" y="363.500" width="25.1" height="46.700" fill="url(#hd)" stroke="#000" stroke-width="1" class="n"/>
<rect x="749.4" y="410.200" width="25.1" height="187.800" fill="url(#hx)"/>
<rect x="749.4" y="410.200" width="25.1" height="187.800" fill="url(#hx2)" opacity=".22"/>
<path class="n" d="M749.4 410.2L749.4 598" stroke="#000" stroke-width="1.2" fill="none" />
<path class="n" d="M774.5 410.2L774.5 598" stroke="#000" stroke-width="0.6" fill="none" />
<rect class="n" x="749.4" y="598" width="25.1" height="57.1" rx="0" stroke="#000" stroke-width="1" fill="#fff"/>
<rect x="749.4" y="655.100" width="25.1" height="47.100" fill="url(#hd)" stroke="#000" stroke-width="1" class="n"/>
<path d="M749.7 702.2L732.2 759.9" stroke="#000" stroke-width="1" fill="none" />
<path d="M750.87 702.2L735.07 759.9" stroke="#000" stroke-width="1" fill="none" />
<path d="M752.03 702.2L737.93 759.9" stroke="#000" stroke-width="1" fill="none" />
<path d="M753.2 702.2L740.8 759.9" stroke="#000" stroke-width="1" fill="none" />
<path d="M754.37 702.2L743.67 759.9" stroke="#000" stroke-width="1" fill="none" />
<path d="M755.53 702.2L746.53 759.9" stroke="#000" stroke-width="1" fill="none" />
<path d="M756.7 702.2L749.4 759.9" stroke="#000" stroke-width="1" fill="none" />
<path d="M757.87 702.2L752.27 759.9" stroke="#000" stroke-width="1" fill="none" />
<path d="M759.03 702.2L755.13 759.9" stroke="#000" stroke-width="1" fill="none" />
<path d="M760.2 702.2L758 759.9" stroke="#000" stroke-width="1" fill="none" />
<path d="M761.37 702.2L760.87 759.9" stroke="#000" stroke-width="1" fill="none" />
<path d="M762.53 702.2L763.73 759.9" stroke="#000" stroke-width="1" fill="none" />
<path d="M763.7 702.2L766.6 759.9" stroke="#000" stroke-width="1" fill="none" />
<path d="M764.87 702.2L769.47 759.9" stroke="#000" stroke-width="1" fill="none" />
<path d="M766.03 702.2L772.33 759.9" stroke="#000" stroke-width="1" fill="none" />
<path d="M767.2 702.2L775.2 759.9" stroke="#000" stroke-width="1" fill="none" />
<path d="M768.37 702.2L778.07 759.9" stroke="#000" stroke-width="1" fill="none" />
<path d="M769.53 702.2L780.93 759.9" stroke="#000" stroke-width="1" fill="none" />
<path d="M770.7 702.2L783.8 759.9" stroke="#000" stroke-width="1" fill="none" />
<path d="M771.87 702.2L786.67 759.9" stroke="#000" stroke-width="1" fill="none" />
<path d="M773.03 702.2L789.53 759.9" stroke="#000" stroke-width="1" fill="none" />
<path d="M774.2 702.2L792.4 759.9" stroke="#000" stroke-width="1" fill="none" />
<path class="n" d="M775.8 363.5L804.6 363.5" stroke="#000" stroke-width="1" fill="none" />
<path class="n" d="M774.5 410.2L804.6 410.2" stroke="#000" stroke-width="1" fill="none" />
<path class="n" d="M804.6 248.6L804.6 410.2" stroke="#000" stroke-width="1" fill="none" />
<circle cx="804.400" cy="248.600" r=".8"/>
<path class="n" d="M795.6 274.7L804.6 274.7" stroke="#000" stroke-width="1" fill="none" />
<path class="n" d="M795.6 306.3L822.3 306.3" stroke="#000" stroke-width="1" fill="none" />
<path class="n" d="M830.6 306.3L830.6 531.6" stroke="#000" stroke-width="1" fill="none" />
<path class="n" d="M830.6 533L830.6 759.9" stroke="#000" stroke-width="1" fill="none" />
<path class="n" d="M795.9 759.9L830.6 759.9" stroke="#000" stroke-width="1" fill="none" />
<path d="M835.7 506.6L836.59 509.17L839.31 509.23L837.15 510.87L837.93 513.47L835.7 511.92L833.47 513.47L834.25 510.87L832.09 509.23L834.81 509.17z" fill="#000" transform="rotate(90 835.7 510.4)"/>
<path d="M852.8 598V556.500C856 558.500 860 558 862.500 552.500C865 547 869 544.500 873 546.500C875.500 548 877 550 877.5 552V598z" fill="url(#hx)"/>
<path d="M852.8 598V556.500C856 558.500 860 558 862.500 552.500C865 547 869 544.500 873 546.500C875.500 548 877 550 877.5 552V598z" fill="url(#hx2)" opacity=".22"/>
<path class="n" d="M849.700 550.400C853 556 859.500 560.500 862.500 552.500C865 546 869.500 543.500 873.500 546.500C876.500 548.500 878.500 551 880.900 553.200" stroke="#000" stroke-width="0.9" fill="none" />
<path class="n" d="M852.8 556L852.8 598" stroke="#000" stroke-width="0.9" fill="none" />
<path class="n" d="M877.5 552L877.5 598" stroke="#000" stroke-width="0.6" fill="none" />
<rect class="n" x="852.8" y="598" width="24.7" height="57.1" rx="0" stroke="#000" stroke-width="0.9" fill="#fff"/>
<rect x="852.8" y="655.100" width="24.7" height="47.100" fill="url(#hd)" stroke="#000" stroke-width="1" class="n"/>
<path d="M853.1 702.2L835.4 759.8" stroke="#000" stroke-width="1" fill="none" />
<path d="M854.25 702.2L838.26 759.8" stroke="#000" stroke-width="1" fill="none" />
<path d="M855.4 702.2L841.12 759.8" stroke="#000" stroke-width="1" fill="none" />
<path d="M856.54 702.2L843.99 759.8" stroke="#000" stroke-width="1" fill="none" />
<path d="M857.69 702.2L846.85 759.8" stroke="#000" stroke-width="1" fill="none" />
<path d="M858.84 702.2L849.71 759.8" stroke="#000" stroke-width="1" fill="none" />
<path d="M859.99 702.2L852.57 759.8" stroke="#000" stroke-width="1" fill="none" />
<path d="M861.13 702.2L855.43 759.8" stroke="#000" stroke-width="1" fill="none" />
<path d="M862.28 702.2L858.3 759.8" stroke="#000" stroke-width="1" fill="none" />
<path d="M863.43 702.2L861.16 759.8" stroke="#000" stroke-width="1" fill="none" />
<path d="M864.58 702.2L864.02 759.8" stroke="#000" stroke-width="1" fill="none" />
<path d="M865.72 702.2L866.88 759.8" stroke="#000" stroke-width="1" fill="none" />
<path d="M866.87 702.2L869.74 759.8" stroke="#000" stroke-width="1" fill="none" />
<path d="M868.02 702.2L872.6 759.8" stroke="#000" stroke-width="1" fill="none" />
<path d="M869.17 702.2L875.47 759.8" stroke="#000" stroke-width="1" fill="none" />
<path d="M870.31 702.2L878.33 759.8" stroke="#000" stroke-width="1" fill="none" />
<path d="M871.46 702.2L881.19 759.8" stroke="#000" stroke-width="1" fill="none" />
<path d="M872.61 702.2L884.05 759.8" stroke="#000" stroke-width="1" fill="none" />
<path d="M873.76 702.2L886.91 759.8" stroke="#000" stroke-width="1" fill="none" />
<path d="M874.9 702.2L889.78 759.8" stroke="#000" stroke-width="1" fill="none" />
<path d="M876.05 702.2L892.64 759.8" stroke="#000" stroke-width="1" fill="none" />
<path d="M877.2 702.2L895.5 759.8" stroke="#000" stroke-width="1" fill="none" />
<rect x="728.1" y="202" width="67" height="14.8" rx="0" stroke="#000" stroke-width="2.2" fill="none"/>
<rect class="n" x="728.1" y="202" width="67" height="14.8" rx="0" stroke="#000" stroke-width="1" fill="none"/>
<rect x="727.1" y="201" width="3.7" height="16.7"/>
<rect x="792.3" y="201" width="3.8" height="16.7"/>
<rect x="735.3" y="206.7" width="52.5" height="4.2"/>
<rect x="736.2" y="208.2" width="50.7" height="1" fill="#fff"/>
<path class="n" d="M731 203.200L735.300 207.500M792 203.200L787.700 207.500M731 216L735 211M792 216L788 211" stroke="#000" stroke-width="0.8" fill="none" />
<path class="n" d="M731 215.3L792 215.3" stroke="#000" stroke-width="0.8" fill="none" />
<rect x="747.2" y="214.8" width="29" height="5"/>
<rect x="750" y="212.8" width="23" height="13.1"/>
<rect x="756" y="219.2" width="11" height="2.8" fill="#fff"/>
<rect x="751.4" y="216.6" width="2.1" height="1" fill="#fff"/>
<rect x="760" y="216.6" width="3" height="1" fill="#fff"/>
<rect x="769.5" y="216.6" width="2.1" height="1" fill="#fff"/>
<rect x="751" y="221.5" width="1.3" height="3" fill="#fff"/>
<rect x="770.7" y="221.5" width="1.3" height="3" fill="#fff"/>
<rect x="731.3" y="212.5" width="1" height="3.5" fill="#fff"/>
<path class="n" d="M729.300 195.300L732.900 200.900M795.300 196.900L791.700 200.900M729.700 222.400L732.100 218M791.700 222.400L789.700 218" stroke="#000" stroke-width="0.8" fill="none" />
<text transform="translate(724.39 187.4) rotate(90)" font-family="'Liberation Serif',serif" font-size="7.6" font-weight="normal" fill="#000" textLength="7.5" lengthAdjust="spacingAndGlyphs" xml:space="preserve">A1</text>
<text transform="translate(795.19 186.2) rotate(90)" font-family="'Liberation Serif',serif" font-size="7.6" font-weight="normal" fill="#000" textLength="12.3" lengthAdjust="spacingAndGlyphs" xml:space="preserve">A37</text>
<text transform="translate(724.59 223.2) rotate(90)" font-family="'Liberation Serif',serif" font-size="7.6" font-weight="normal" fill="#000" textLength="7.5" lengthAdjust="spacingAndGlyphs" xml:space="preserve">B1</text>
<text transform="translate(793.59 224) rotate(90)" font-family="'Liberation Serif',serif" font-size="7.6" font-weight="normal" fill="#000" textLength="11.9" lengthAdjust="spacingAndGlyphs" xml:space="preserve">B37</text>
<text transform="translate(693.58 203.8) rotate(90)" font-family="'Liberation Sans',sans-serif" font-size="13.4" font-weight="normal" fill="#000" xml:space="preserve">P1</text>
<path class="n" d="M727.4 256.2L795.6 256.2" stroke="#000" stroke-width="1.1" fill="none" />
<path class="n" d="M727.4 254.5L727.4 275" stroke="#000" stroke-width="1" fill="none" />
<path class="n" d="M795.6 254.5L795.6 275" stroke="#000" stroke-width="1" fill="none" />
<path class="n" d="M761.5 254.8L761.5 257.6" stroke="#000" stroke-width="1" fill="none" />
<rect x="728" y="275.2" width="67" height="30.5" rx="0" stroke="#000" stroke-width="1.5" fill="none"/>
<rect class="n" x="728" y="275.2" width="67" height="30.5" rx="0" stroke="#000" stroke-width="1" fill="none"/>
<path d="M727.2 306L795.9 306" stroke="#000" stroke-width="1.9" fill="none" />
<path class="n" d="M727.2 306L795.9 306" stroke="#000" stroke-width="1" fill="none"/>
<rect x="727.2" y="274.7" width="2.1" height="2.8"/>
<rect x="793.7" y="274.7" width="2.2" height="2.8"/>
<path class="n" d="M730.600 276V290.700H732.700V276" stroke="#000" stroke-width="0.9" fill="none" />
<rect x="790.3" y="275.5" width="2.7" height="15.2"/>
<path class="n" d="M733 275.600H747.700L749.500 277.600H773.800L775.600 275.600H790M733 277.600H747L749 279.800H774.300L776.300 277.600H790" stroke="#000" stroke-width="0.9" fill="none" />
<path class="n" d="M754.500 279.800V282L752.600 284V291.300M768.600 279.800V282L770.500 284V291.300M757.500 279.800V281.500M765.800 279.800V281.500" stroke="#000" stroke-width="0.9" fill="none" />
<path class="n" d="M759.100 279.800V283.500Q761.500 286.500 763.900 283.500V279.800" stroke="#000" stroke-width="0.9" fill="none" />
<rect x="754.3" y="284.4" width="3.3" height="3.2"/>
<rect x="766.3" y="284.4" width="3.3" height="3.2"/>
<rect class="n" x="747.4" y="291.4" width="28.3" height="9.6" rx="0" stroke="#000" stroke-width="1" fill="none"/>
<rect x="749.5" y="296.3" width="24" height="2.3"/>
<rect x="749.5" y="291.4" width="3" height="5.1"/>
<rect x="770.5" y="291.4" width="3" height="5.1"/>
<rect x="756" y="292.4" width="10.9" height="3.5" fill="#fff"/>
<rect x="750.3" y="292.8" width="3.2" height="1.8" fill="#fff"/>
<rect x="769.5" y="292.8" width="3.2" height="1.8" fill="#fff"/>
<path class="n" d="M749 296.500V301.500L751 305.500M774.100 296.500V301.500L772.100 305.500M751 298.600V305.700M772.200 298.600V305.700" stroke="#000" stroke-width="0.9" fill="none" />
<text x="654.4" y="254.6" font-family="'Liberation Serif',serif" font-size="6.6" textLength="25.6" lengthAdjust="spacingAndGlyphs">6.86REF</text>
<path class="n" d="M654.4 255.6L706.3 255.6" stroke="#000" stroke-width="0.9" fill="none" />
<path class="n" d="M690.6 255.6L690.6 275.6" stroke="#000" stroke-width="0.9" fill="none" />
<path class="n" d="M706.3 255.6L706.3 306.9" stroke="#000" stroke-width="0.9" fill="none" />
<path d="M690.600 255.600l4.500-1v2zM706.300 255.600l-4.500-1v2z"/>
<path d="M690 275.8L706.8 275.8" stroke="#000" stroke-width="2" fill="none" />
<path class="n" d="M690 275.8L706.8 275.8" stroke="#000" stroke-width="1" fill="none"/>
<path d="M691 275.6L691 307" stroke="#000" stroke-width="1.6" fill="none" />
<path class="n" d="M691 275.6L691 307" stroke="#000" stroke-width="1" fill="none"/>
<path d="M690.3 306.6L697.5 306.6" stroke="#000" stroke-width="2" fill="none" />
<path class="n" d="M690.3 306.6L697.5 306.6" stroke="#000" stroke-width="1" fill="none"/>
<path class="n" d="M697.5 306.6L706.3 306.6" stroke="#000" stroke-width="0.9" fill="none" />
<path class="n" d="M706.300 285.500V289L708.300 291V297.500L713.800 298.800V306.300H706.300" stroke="#000" stroke-width="0.9" fill="none" />
<rect x="707" y="291" width="2" height="7.5"/>
<path d="M708.500 293.500L711.300 298.500H708.500z"/>
<path class="n" d="M683.8 280L694.4 285.6" stroke="#000" stroke-width="0.8" fill="none" />
<path d="M701.9 306.9L701.9 362.5" stroke="#000" stroke-width="2" fill="none" />
<path class="n" d="M701.9 306.9L701.9 362.5" stroke="#000" stroke-width="1" fill="none"/>
<circle class="n" cx="678.5" cy="270.6" r="5.5" fill="#fff" stroke="#000" stroke-width=".9"/>
<text transform="translate(676.25 268.73) rotate(90)" font-family="'Liberation Serif',serif" font-size="7.5" font-weight="normal" fill="#000" textLength="3.75" lengthAdjust="spacingAndGlyphs" xml:space="preserve">3</text>
<circle class="n" cx="678.5" cy="281.9" r="5.5" fill="#fff" stroke="#000" stroke-width=".9"/>
<text transform="translate(676.25 280.02) rotate(90)" font-family="'Liberation Serif',serif" font-size="7.5" font-weight="normal" fill="#000" textLength="3.75" lengthAdjust="spacingAndGlyphs" xml:space="preserve">4</text>
<circle class="n" cx="678.5" cy="293.1" r="5.5" fill="#fff" stroke="#000" stroke-width=".9"/>
<text transform="translate(676.25 291.23) rotate(90)" font-family="'Liberation Serif',serif" font-size="7.5" font-weight="normal" fill="#000" textLength="3.75" lengthAdjust="spacingAndGlyphs" xml:space="preserve">5</text>
<circle class="n" cx="678.5" cy="304.4" r="5.5" fill="#fff" stroke="#000" stroke-width=".9"/>
<text transform="translate(676.25 302.52) rotate(90)" font-family="'Liberation Serif',serif" font-size="7.5" font-weight="normal" fill="#000" textLength="3.75" lengthAdjust="spacingAndGlyphs" xml:space="preserve">6</text>
<circle class="n" cx="678.5" cy="315" r="5.5" fill="#fff" stroke="#000" stroke-width=".9"/>
<text transform="translate(676.25 313.12) rotate(90)" font-family="'Liberation Serif',serif" font-size="7.5" font-weight="normal" fill="#000" textLength="3.75" lengthAdjust="spacingAndGlyphs" xml:space="preserve">7</text>
<circle class="n" cx="678.5" cy="326.3" r="5.5" fill="#fff" stroke="#000" stroke-width=".9"/>
<text transform="translate(676.25 322.55) rotate(90)" font-family="'Liberation Serif',serif" font-size="7.5" font-weight="normal" fill="#000" textLength="7.5" lengthAdjust="spacingAndGlyphs" xml:space="preserve">11</text>
<circle class="n" cx="678.5" cy="336.9" r="5.5" fill="#fff" stroke="#000" stroke-width=".9"/>
<text transform="translate(676.25 333.15) rotate(90)" font-family="'Liberation Serif',serif" font-size="7.5" font-weight="normal" fill="#000" textLength="7.5" lengthAdjust="spacingAndGlyphs" xml:space="preserve">15</text>
<text transform="translate(675.86 343.8) rotate(90)" font-family="'Liberation Serif',serif" font-size="8" font-weight="normal" fill="#000" textLength="6.8" lengthAdjust="spacingAndGlyphs" xml:space="preserve">*2</text>
<text class="cs" transform="translate(650.85 270.11) rotate(90) scale(0.98 1)" x="0 7.71 15.43 23.14" font-size="7.5" fill="#000">模具编号</text>
<text transform="translate(651.19 300.24) rotate(90)" font-family="'Liberation Mono',monospace" font-size="7.6" font-weight="normal" fill="#000" textLength="3.78" lengthAdjust="spacingAndGlyphs" stroke="#fff" stroke-width="0.15" paint-order="fill stroke" xml:space="preserve">:</text>
<text transform="translate(651.16 311.9) rotate(90)" font-family="'Liberation Serif',serif" font-size="7.7" font-weight="normal" fill="#000" textLength="32.5" lengthAdjust="spacingAndGlyphs" xml:space="preserve">HST-1412</text>
<path class="n" d="M738 375.3L749.4 375.3" stroke="#000" stroke-width="0.9" fill="none" />
<circle class="n" cx="732.6" cy="375.3" r="5.6" fill="#fff" stroke="#000" stroke-width=".9"/>
<text transform="translate(730.35 371.55) rotate(90)" font-family="'Liberation Serif',serif" font-size="7.5" font-weight="normal" fill="#000" textLength="7.5" lengthAdjust="spacingAndGlyphs" xml:space="preserve">12</text>
<text transform="translate(729.96 384.5) rotate(90)" font-family="'Liberation Serif',serif" font-size="8" font-weight="normal" fill="#000" textLength="6.8" lengthAdjust="spacingAndGlyphs" xml:space="preserve">*2</text>
<path class="n" d="M736 485.3L749.3 485.3" stroke="#000" stroke-width="0.9" fill="none" />
<circle class="n" cx="730.1" cy="485.3" r="5.6" fill="#fff" stroke="#000" stroke-width=".9"/>
<text transform="translate(727.85 483.43) rotate(90)" font-family="'Liberation Serif',serif" font-size="7.5" font-weight="normal" fill="#000" textLength="3.75" lengthAdjust="spacingAndGlyphs" xml:space="preserve">1</text>
<circle class="n" cx="730.1" cy="496.5" r="5.6" fill="#fff" stroke="#000" stroke-width=".9"/>
<text transform="translate(727.85 494.62) rotate(90)" font-family="'Liberation Serif',serif" font-size="7.5" font-weight="normal" fill="#000" textLength="3.75" lengthAdjust="spacingAndGlyphs" xml:space="preserve">2</text>
<circle class="n" cx="730.1" cy="507.3" r="5.6" fill="#fff" stroke="#000" stroke-width=".9"/>
<text transform="translate(727.85 503.55) rotate(90)" font-family="'Liberation Serif',serif" font-size="7.5" font-weight="normal" fill="#000" textLength="7.5" lengthAdjust="spacingAndGlyphs" xml:space="preserve">13</text>
<path class="n" d="M736 619.7L749.4 619.7" stroke="#000" stroke-width="0.9" fill="none" />
<circle class="n" cx="730.3" cy="619.7" r="5.6" fill="#fff" stroke="#000" stroke-width=".9"/>
<text transform="translate(728.05 615.95) rotate(90)" font-family="'Liberation Serif',serif" font-size="7.5" font-weight="normal" fill="#000" textLength="7.5" lengthAdjust="spacingAndGlyphs" xml:space="preserve">14</text>
<rect class="n" x="822.6" y="275.3" width="66.9" height="30.3" rx="0" stroke="#000" stroke-width="1.1" fill="none"/>
<rect x="822.1" y="274.8" width="3.7" height="12.7"/>
<rect x="886.8" y="274.8" width="3.2" height="12.7"/>
<path class="n" d="M826 276L887 276" stroke="#000" stroke-width="0.9" fill="none" />
<path class="n" d="M822 287.5L890 287.5" stroke="#000" stroke-width="1.2" fill="none" />
<path d="M822 305.9L890 305.9" stroke="#000" stroke-width="1.8" fill="none" />
<path class="n" d="M822 305.9L890 305.9" stroke="#000" stroke-width="1" fill="none"/>
<rect x="829.4" y="277.7" width="54.8" height="8.6"/>
<rect x="834.5" y="284.9" width="45.5" height="0.6" fill="#fff"/>
<rect x="827.3" y="278" width="1.3" height="8" fill="#fff"/>
<rect x="885.2" y="278" width="1.1" height="8" fill="#fff"/>
<rect x="822.8" y="297" width="3" height="7.5"/>
<rect x="886.8" y="297" width="3" height="7.5"/>
<path class="n" d="M852.500 306.200V330Q852.500 332.500 850 332.500H844Q841.300 332.500 841.300 335.200V360.900Q841.300 363.600 844 363.600H868.200Q870.900 363.600 870.900 360.900V335.200Q870.900 332.500 868.200 332.500H862.500Q860 332.500 860 330V306.200" stroke="#222" stroke-width="1" fill="none" />
<path d="M728.3 759.9L795.9 759.9" stroke="#000" stroke-width="1.6" fill="none" />
<path class="n" d="M728.3 759.9L795.9 759.9" stroke="#000" stroke-width="1" fill="none"/>
<rect x="728.3" y="759.9" width="3.7" height="25.7"/>
<rect x="792.9" y="759.9" width="3" height="25.7"/>
<rect x="730.2" y="767.5" width="2" height="1.5" fill="#fff"/>
<rect x="792.7" y="767.5" width="1.8" height="1.5" fill="#fff"/>
<rect x="736.2" y="774" width="52.6" height="4.9"/>
<rect x="737.2" y="775.9" width="50.6" height="1" fill="#fff"/>
<path class="n" d="M732.200 771.500Q734.500 773.500 736.500 774.200M792.700 771.500Q790.500 773.500 788.500 774.200M736.500 779L734.500 783M788.500 779L790.500 783" stroke="#000" stroke-width="0.8" fill="none" />
<path class="n" d="M732 783.3L793 783.3" stroke="#000" stroke-width="0.9" fill="none" />
<path d="M728.3 785L750 785" stroke="#000" stroke-width="1.4" fill="none" />
<path class="n" d="M728.3 785L750 785" stroke="#000" stroke-width="1" fill="none"/>
<path d="M775 785L795.9 785" stroke="#000" stroke-width="1.4" fill="none" />
<path class="n" d="M775 785L795.9 785" stroke="#000" stroke-width="1" fill="none"/>
<rect x="791.2" y="780.5" width="1.1" height="3.8" fill="#fff"/>
<rect x="749.9" y="782.5" width="25" height="6.4"/>
<rect x="752.5" y="783.2" width="19.5" height="1" fill="#fff"/>
<rect x="756.5" y="786.8" width="11.5" height="2.1" fill="#fff"/>
<rect x="751.5" y="786" width="1.2" height="1.2" fill="#fff"/>
<rect x="771.8" y="786" width="1.2" height="1.2" fill="#fff"/>
<path class="n" d="M751.500 782.500Q755 780.500 760 780.500H765Q770 780.500 773.500 782.500" stroke="#000" stroke-width="0.9" fill="none" />
<rect x="753" y="790.2" width="18.8" height="2.6"/>
<path class="n" d="M726 770.3L728.3 771.5" stroke="#000" stroke-width="0.8" fill="none" />
<path class="n" d="M798 771.3L800.5 770.3" stroke="#000" stroke-width="0.8" fill="none" />
<path class="n" d="M730.2 786L731.7 789" stroke="#000" stroke-width="0.8" fill="none" />
<path class="n" d="M790.2 786L791.2 789" stroke="#000" stroke-width="0.8" fill="none" />
<text transform="translate(719.49 765.9) rotate(90)" font-family="'Liberation Serif',serif" font-size="7.6" font-weight="normal" fill="#000" textLength="7.4" lengthAdjust="spacingAndGlyphs" xml:space="preserve">A1</text>
<text transform="translate(802.69 762.5) rotate(90)" font-family="'Liberation Serif',serif" font-size="7.6" font-weight="normal" fill="#000" textLength="12" lengthAdjust="spacingAndGlyphs" xml:space="preserve">A37</text>
<text transform="translate(728.19 788.9) rotate(90)" font-family="'Liberation Serif',serif" font-size="7.6" font-weight="normal" fill="#000" textLength="7.4" lengthAdjust="spacingAndGlyphs" xml:space="preserve">B1</text>
<text transform="translate(789.19 789.9) rotate(90)" font-family="'Liberation Serif',serif" font-size="7.6" font-weight="normal" fill="#000" textLength="12" lengthAdjust="spacingAndGlyphs" xml:space="preserve">B37</text>
<rect x="729" y="810.2" width="66.3" height="26.8" rx="0" stroke="#000" stroke-width="1.5" fill="none"/>
<rect class="n" x="729" y="810.2" width="66.3" height="26.8" rx="0" stroke="#000" stroke-width="1" fill="none"/>
<path class="n" d="M729 832.5L795.3 832.5" stroke="#000" stroke-width="0.9" fill="none" />
<path d="M728.3 837.2L795.9 837.2" stroke="#000" stroke-width="1.7" fill="none" />
<path class="n" d="M728.3 837.2L795.9 837.2" stroke="#000" stroke-width="1" fill="none"/>
<rect x="728.3" y="809.4" width="2.2" height="2.6"/>
<rect x="731.9" y="811" width="2" height="14.5"/>
<path class="n" d="M791.700 811V825.500H793.500V811" stroke="#000" stroke-width="0.9" fill="none" />
<path d="M733.500 810.400H748.500L750.300 813H774.500L776.300 810.400H791.700" stroke="#000" stroke-width="2" fill="none" />
<path class="n" d="M733.500 810.400H748.500L750.300 813H774.500L776.300 810.400H791.700" stroke="#000" stroke-width="1" fill="none"/>
<path class="n" d="M754.500 813V817L753 819V825.500M769.500 813V817L771 819V825.500M758.500 813V816M765.500 813V816" stroke="#000" stroke-width="0.9" fill="none" />
<rect x="754.5" y="815" width="3" height="3"/>
<rect x="766.5" y="815" width="3" height="3"/>
<rect x="752.5" y="820.5" width="8.5" height="1.5"/>
<rect x="763" y="820.5" width="8.5" height="1.5"/>
<path class="n" d="M761.300 813V822M762.700 813V822" stroke="#000" stroke-width="0.7" fill="none" />
<rect class="n" x="750.4" y="825.5" width="24.2" height="11" rx="0" stroke="#000" stroke-width="1.2" fill="#fff"/>
<path d="M752 826.5L773 826.5" stroke="#000" stroke-width="1.6" fill="none" />
<path class="n" d="M752 826.5L773 826.5" stroke="#000" stroke-width="1" fill="none"/>
<rect x="757" y="827.5" width="11" height="2.2" fill="#fff"/>
<path class="n" d="M757 827.500H768V829.700H757z" stroke="#000" stroke-width="0.7" fill="none" />
<rect x="752" y="827" width="1.5" height="4"/>
<rect x="754.8" y="827" width="1.2" height="4"/>
<rect x="769" y="827" width="1.2" height="4"/>
<rect x="771.5" y="827" width="1.5" height="4"/>
<path class="n" d="M756.5 831.7L768.5 831.7" stroke="#000" stroke-width="0.9" fill="none" />
<path class="n" d="M753.500 833.500H757.500V835.500H753.500zM759 833.500H766V835.800H759zM767.500 833.500H771.500V835.500H767.500z" stroke="#000" stroke-width="0.8" fill="#fff" />
<path class="n" d="M795.9 809.4L803.8 809.4" stroke="#000" stroke-width="0.9" fill="none" />
<path class="n" d="M795.9 837.5L803.8 837.5" stroke="#000" stroke-width="0.9" fill="none" />
<path class="n" d="M802.8 809.4L802.8 872.7" stroke="#000" stroke-width="0.9" fill="none" />
<path d="M802.800 809.400l-1 4.500h2zM802.800 837.500l-1-4.500h2z"/>
<text transform="translate(803.76 842) rotate(90)" font-family="'Liberation Serif',serif" font-size="6.8" font-weight="normal" fill="#000" textLength="30" lengthAdjust="spacingAndGlyphs" xml:space="preserve">12.20REF</text>
<path class="n" d="M719 826.4L728.3 825.5" stroke="#000" stroke-width="0.8" fill="none" />
<circle class="n" cx="713" cy="826.4" r="5.6" fill="#fff" stroke="#000" stroke-width=".9"/>
<text transform="translate(710.75 824.52) rotate(90)" font-family="'Liberation Serif',serif" font-size="7.5" font-weight="normal" fill="#000" textLength="3.75" lengthAdjust="spacingAndGlyphs" xml:space="preserve">7</text>
<circle class="n" cx="713" cy="837.4" r="5.6" fill="#fff" stroke="#000" stroke-width=".9"/>
<text transform="translate(710.75 835.52) rotate(90)" font-family="'Liberation Serif',serif" font-size="7.5" font-weight="normal" fill="#000" textLength="3.75" lengthAdjust="spacingAndGlyphs" xml:space="preserve">8</text>
<circle class="n" cx="713" cy="848.3" r="5.6" fill="#fff" stroke="#000" stroke-width=".9"/>
<text transform="translate(710.75 846.42) rotate(90)" font-family="'Liberation Serif',serif" font-size="7.5" font-weight="normal" fill="#000" textLength="3.75" lengthAdjust="spacingAndGlyphs" xml:space="preserve">9</text>
<circle class="n" cx="713" cy="859.3" r="5.6" fill="#fff" stroke="#000" stroke-width=".9"/>
<text transform="translate(710.75 855.55) rotate(90)" font-family="'Liberation Serif',serif" font-size="7.5" font-weight="normal" fill="#000" textLength="7.5" lengthAdjust="spacingAndGlyphs" xml:space="preserve">10</text>
<circle class="n" cx="713" cy="870.4" r="5.6" fill="#fff" stroke="#000" stroke-width=".9"/>
<text transform="translate(710.75 866.65) rotate(90)" font-family="'Liberation Serif',serif" font-size="7.5" font-weight="normal" fill="#000" textLength="7.5" lengthAdjust="spacingAndGlyphs" xml:space="preserve">11</text>
<circle class="n" cx="713" cy="881.5" r="5.6" fill="#fff" stroke="#000" stroke-width=".9"/>
<text transform="translate(710.75 877.75) rotate(90)" font-family="'Liberation Serif',serif" font-size="7.5" font-weight="normal" fill="#000" textLength="7.5" lengthAdjust="spacingAndGlyphs" xml:space="preserve">15</text>
<text transform="translate(710.36 888) rotate(90)" font-family="'Liberation Serif',serif" font-size="8" font-weight="normal" fill="#000" textLength="6.8" lengthAdjust="spacingAndGlyphs" xml:space="preserve">*2</text>
<text class="cs" transform="translate(667.75 812.71) rotate(90) scale(0.98 1)" x="0 7.71 15.43 23.14" font-size="7.5" fill="#000">模具编号</text>
<text transform="translate(668.09 842.84) rotate(90)" font-family="'Liberation Mono',monospace" font-size="7.6" font-weight="normal" fill="#000" textLength="3.78" lengthAdjust="spacingAndGlyphs" stroke="#fff" stroke-width="0.15" paint-order="fill stroke" xml:space="preserve">:</text>
<text transform="translate(667.86 853.8) rotate(90)" font-family="'Liberation Serif',serif" font-size="7.7" font-weight="normal" fill="#000" textLength="32.9" lengthAdjust="spacingAndGlyphs" xml:space="preserve">HST-1412</text>
<path class="n" d="M758.500 837.500V859.400Q758.500 861.900 756 861.900H750Q747.300 861.900 747.300 864.600V889Q747.300 891.700 750 891.700H775.300Q778 891.700 778 889V864.600Q778 861.900 775.300 861.900H768.900Q766.400 861.900 766.400 859.400V837.500" stroke="#000" stroke-width="1" fill="none" />
<path d="M622.1 782L665.2 782" stroke="#000" stroke-width="2" fill="none" />
<path class="n" d="M622.1 782L665.2 782" stroke="#000" stroke-width="1" fill="none"/>
<path d="M665.900 760.900H682V770.700H694V785.200H665.900z" stroke="#000" stroke-width="1.8" fill="none" />
<path class="n" d="M665.900 760.900H682V770.700H694V785.200H665.900z" stroke="#000" stroke-width="1" fill="none"/>
<path class="n" d="M670.400 785V767.700H682.600" stroke="#000" stroke-width="1.2" fill="none" />
<path d="M670.5 762.3L682 762.3" stroke="#000" stroke-width="1.6" fill="none" />
<path class="n" d="M670.5 762.3L682 762.3" stroke="#000" stroke-width="1" fill="none"/>
<rect x="676.3" y="763.5" width="3" height="3.5"/>
<rect x="677.2" y="764.5" width="1" height="1.2" fill="#fff"/>
<rect x="680.3" y="763" width="1.2" height="4.5"/>
<path class="n" d="M668.300 762V765" stroke="#000" stroke-width="0.8" fill="none" />
<path d="M665.900 785.200V792.200H673.800L677.500 786.500" stroke="#000" stroke-width="1.6" fill="none" />
<path class="n" d="M665.900 785.200V792.200H673.800L677.500 786.500" stroke="#000" stroke-width="1" fill="none"/>
<path class="n" d="M667.800 791Q668 787 669.500 786.500Q671 790.500 674 790.500L676.500 786.200" stroke="#000" stroke-width="0.9" fill="none" />
<rect x="672.5" y="785.2" width="4.5" height="1.8"/>
<rect x="681" y="785.2" width="1.5" height="1.3"/>
<rect class="n" x="832.5" y="760.7" width="66.3" height="23.1" rx="0" stroke="#000" stroke-width="1" fill="none"/>
<path d="M832 760.2L899.2 760.2" stroke="#000" stroke-width="2" fill="none" />
<path class="n" d="M832 760.2L899.2 760.2" stroke="#000" stroke-width="1" fill="none"/>
<path d="M832 784.3L899.2 784.3" stroke="#000" stroke-width="2" fill="none" />
<path class="n" d="M832 784.3L899.2 784.3" stroke="#000" stroke-width="1" fill="none"/>
<rect class="n" x="851.2" y="778.3" width="29.3" height="2.5" rx="1.2" stroke="#000" stroke-width="0.8" fill="#fff"/>
<rect x="860.2" y="777.2" width="11.6" height="4.4"/>
<rect x="853.3" y="783.6" width="25.4" height="4.7"/>
<rect x="853.300" y="783.600" width="25.400" height="4.700" rx="1.500"/>
<rect x="859.5" y="788.3" width="1.5" height="2.3"/>
<rect x="871" y="788.3" width="1.5" height="2.3"/>
<path class="n" d="M863 788.3L863 790.6" stroke="#000" stroke-width="0.7" fill="none" />
<path class="n" d="M869 788.3L869 790.6" stroke="#000" stroke-width="0.7" fill="none" />
<rect x="856.2" y="790.5" width="18.8" height="2.1"/>
<rect class="n" x="724.5" y="904.7" width="67.3" height="25.2" rx="0" stroke="#000" stroke-width="1" fill="none"/>
<path d="M724 904.9L792.3 904.9" stroke="#000" stroke-width="1.9" fill="none" />
<path class="n" d="M724 904.9L792.3 904.9" stroke="#000" stroke-width="1" fill="none"/>
<path d="M724 929.7L792.3 929.7" stroke="#000" stroke-width="1.9" fill="none" />
<path class="n" d="M724 929.7L792.3 929.7" stroke="#000" stroke-width="1" fill="none"/>
<path d="M724.9 904.7L724.9 929.9" stroke="#000" stroke-width="1.7" fill="none" />
<path class="n" d="M724.9 904.7L724.9 929.9" stroke="#000" stroke-width="1" fill="none"/>
<rect x="749" y="896.8" width="18.9" height="3"/>
<rect x="753" y="899.8" width="1.5" height="1.7"/>
<rect x="762.5" y="899.8" width="1.5" height="1.7"/>
<path class="n" d="M756.5 899.8L756.5 901.5" stroke="#000" stroke-width="0.7" fill="none" />
<path class="n" d="M760.5 899.8L760.5 901.5" stroke="#000" stroke-width="0.7" fill="none" />
<rect x="745.300" y="901" width="25.500" height="6" rx="1.500"/>
<rect class="n" x="743.1" y="909" width="29.9" height="2.8" rx="1.3" stroke="#000" stroke-width="0.8" fill="#fff"/>
<rect x="752" y="907.9" width="12" height="4.8"/>
<path class="n" d="M713 904.7L724.5 904.7" stroke="#000" stroke-width="0.9" fill="none" />
<path class="n" d="M713 929.9L724.5 929.9" stroke="#000" stroke-width="0.9" fill="none" />
<path class="n" d="M713.7 904.7L713.7 929.9" stroke="#000" stroke-width="0.9" fill="none" />
<path d="M713.700 904.700l-1 4.500h2zM713.700 929.900l-1-4.500h2z"/>
<text transform="translate(715.49 906) rotate(90)" font-family="'Liberation Serif',serif" font-size="6.4" font-weight="normal" fill="#000" textLength="22.5" lengthAdjust="spacingAndGlyphs" xml:space="preserve">11.40REF</text>
<path class="n" d="M724.5 929.9L724.5 944" stroke="#000" stroke-width="1" fill="none" />
<path class="n" d="M791.8 929.9L791.8 944" stroke="#000" stroke-width="1" fill="none" />
<path class="n" d="M724.5 943.3L791.8 943.3" stroke="#000" stroke-width="0.9" fill="none" />
<path d="M724.500 943.300l5-1.100v2.200zM791.800 943.300l-5-1.100v2.200z"/>
<text x="743.9" y="942" font-family="'Liberation Serif',serif" font-size="6.8" textLength="29.1" lengthAdjust="spacingAndGlyphs">28.60REF</text>
<text transform="translate(824.38 909.5) rotate(90)" font-family="'Liberation Sans',sans-serif" font-size="13.4" font-weight="normal" fill="#000" xml:space="preserve">P2</text>
</g></svg>
<div id="docshadow" class="abs"></div>
<div id="vs" class="abs"><div class="abs" style="left:0;top:0;width:17px;height:8px;background:#e2e2e2;border:1px solid #fff;border-bottom:1px solid #999"></div>
<svg width="17" height="907" style="left:0;top:0"><path d="M5.700 19.300l3.750-4.500 3.750 4.500z" fill="#7c7c7c"/><path d="M5.500 19.500h8" stroke="#b4b4b4" stroke-width=".8"/><path d="M5.700 896.200l3.750 4.500 3.750-4.500z" fill="#7c7c7c"/><path d="M5.500 896h8" stroke="#b4b4b4" stroke-width=".8"/></svg></div>
<div id="nav" class="abs"><div id="navl" class="abs"></div><div id="navhead" class="abs"></div><div id="strip" class="abs"></div><div id="thumbs" class="abs"></div>
<div class="abs" style="left:47px;top:72px;width:185px;height:832px;"><div class="abs" style="left:9px;top:6px;width:166px;height:150px;border:1px dotted #222"></div>
<div class="serif abs" style="left:9px;top:139px;width:166px;text-align:center;font-size:12.5px;line-height:14px">1</div>
<div class="abs" style="left:48.7px;top:9.9px;width:87.8px;height:124.5px;background:#fff;box-shadow:1px 1px 2px rgba(0,0,0,.55),0 0 1px rgba(0,0,0,.4);overflow:hidden"><svg width="87.8" height="124.5" viewBox="424 129 635 898" style="left:0;top:0" shape-rendering="crispEdges"><use href="#dwg"/></svg></div>
<div class="abs" style="left:133px;top:131px;width:6px;height:6px;background:#2a2a2a"></div></div>
<svg width="236" height="908" style="left:-8px;top:-124px" viewBox="0 0 236 908">

<defs><linearGradient id="gbm" x1="0" y1="0" x2="0" y2="1"><stop offset="0" stop-color="#b8d0e0"/><stop offset="1" stop-color="#d4e2ec"/></linearGradient></defs>
<!-- pages icon -->
<rect x="17.500" y="139" width="15" height="17.500" rx="1" fill="#fafafa" stroke="#444" stroke-width="1"/>
<path d="M22.500 134.500h11l4 4v14h-15z" fill="#fdfdfd" stroke="#444" stroke-width="1"/>
<path d="M33.500 134.500v4h4" fill="none" stroke="#555" stroke-width=".8"/>
<!-- collapse button -->
<rect x="227.500" y="138.500" width="12" height="12" fill="#f4f4f4" stroke="#777" stroke-width="1"/>
<path d="M235.500 141.500v6l-4-3z" fill="#333"/>
<!-- options button -->
<rect x="58.500" y="174.500" width="15" height="14.500" rx="1" fill="#f2f2f2" stroke="#444" stroke-width="1"/>
<path d="M59 176.500h14" stroke="#444" stroke-width="1"/>
<circle cx="62.300" cy="180.200" r="1.700" fill="#bbb" stroke="#555" stroke-width=".6"/><circle cx="62.300" cy="185" r="1.700" fill="#bbb" stroke="#555" stroke-width=".6"/>
<path d="M65.500 180.200h6.500M65.500 185h6.500" stroke="#333" stroke-width="1"/>
<path d="M77 180h5.400l-2.700 3.200z" fill="#111"/>
<!-- trash (disabled) -->
<path d="M219.500 177.500h10v9.500c0 1-.6 1.500-1.500 1.500h-7c-.9 0-1.500-.5-1.500-1.500z" fill="#dedede" stroke="#bdbdbd" stroke-width="1"/>
<path d="M218 176.500h13M222 176.500v-2h5v2" fill="none" stroke="#bdbdbd" stroke-width="1.200"/>
<path d="M222 179.500v7M224.500 179.500v7M227 179.500v7" stroke="#c4c4c4" stroke-width="1"/>
<!-- bookmark -->
<path d="M29 178.500h5c1.300 0 2 .7 2 2v7.500h-7z" fill="#9ab8d0" stroke="#8aa2b8" stroke-width=".7"/>
<path d="M18.800 180.500c0-1.300.7-2 2-2h8.700c-.500.500-.500 1.500-.500 2.500v18l-5-4.500-5.200 4.500z" fill="url(#gbm)" stroke="#90a8bc" stroke-width=".9"/>
<!-- paperclip -->
<g transform="translate(0 -4)">
<path d="M22.500 239.500l9.500-7.800c2.200-1.800 4.800 1 2.600 2.900l-11.200 9.300c-3.600 3-8-1.800-4.300-4.900l11.800-9.800c5-4.100 10.800 2.200 6 6.500l-9.300 7.800" fill="none" stroke="#8c8c8c" stroke-width="2.100" stroke-linecap="round"/>
<path d="M22.500 239.500l9.500-7.800c2.200-1.800 4.800 1 2.600 2.900l-11.200 9.300c-3.600 3-8-1.800-4.300-4.900l11.800-9.800c5-4.100 10.800 2.200 6 6.500l-9.300 7.800" fill="none" stroke="#c6c6c6" stroke-width=".6" stroke-linecap="round" transform="translate(-.5 -.6)"/>
</g>
<!-- layers -->
<path d="M27 270.500l11.500 6.300-11.500 6.700-11.500-6.700z" fill="#b6cde4" stroke="#8ea6c0" stroke-width=".8"/>
<path d="M27 264.300l11.500 6.300-11.500 6.700-11.500-6.700z" fill="#e6e9ec" fill-opacity=".82" stroke="#98a2ac" stroke-width=".8"/>
<!-- signature -->
<rect x="15.500" y="311.500" width="20" height="11" fill="#eeeeee" stroke="#7e7e7e" stroke-width=".9"/>
<path d="M18 320c1.500-.5 3-3 3.300-5.200.2-1.300-1-1.200-1.100.3-.1 2 .3 4.500 1.500 4.700 1 .2 1.600-2 2.600-2 .8 0 .4 1.800 1.800 1.600" fill="none" stroke="#444" stroke-width=".9"/>
<g transform="rotate(-50 30 318)"><rect x="20" y="315.700" width="19" height="4.600" rx="2.300" fill="#b8d0e6" stroke="#6e88a2" stroke-width=".8"/><path d="M20.500 316.500l-2.500 1.500 2.500 1.500" fill="#e8eef4" stroke="#6e88a2" stroke-width=".6"/></g>

<text class="cjb" x="57" y="149.4" font-size="12.8" fill="#000">页面缩略图</text>
</svg>
</div>
</div></body></html>
